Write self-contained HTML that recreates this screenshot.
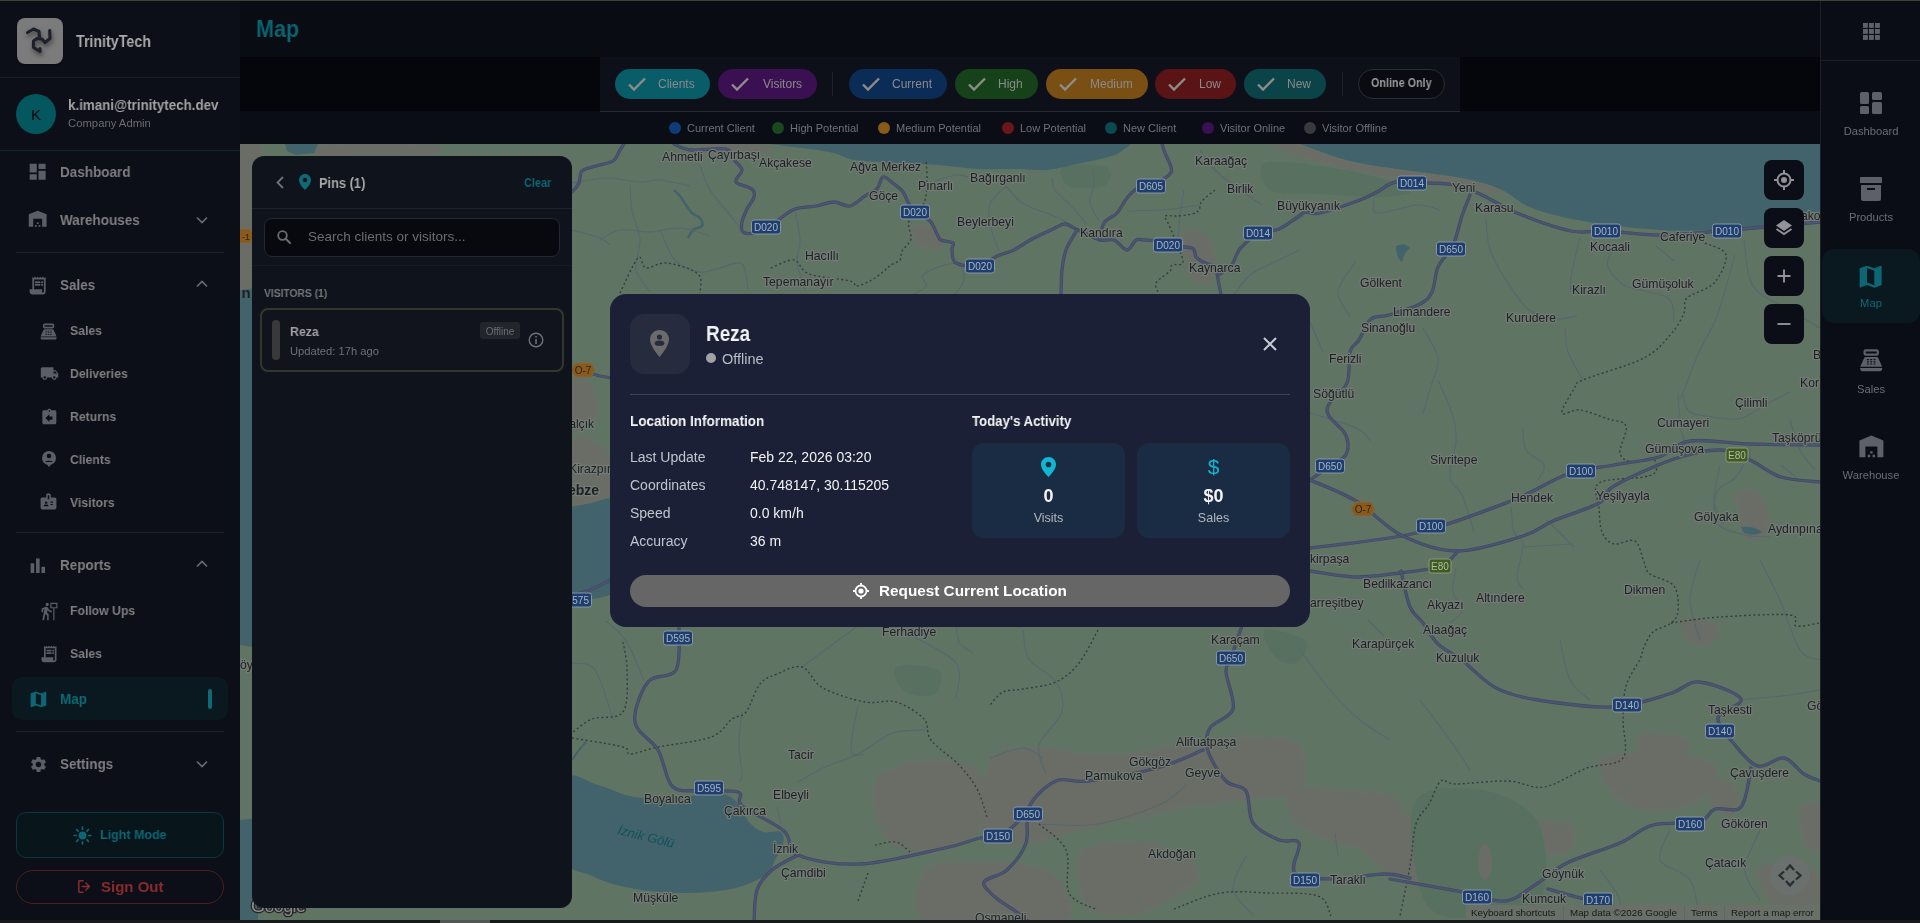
<!DOCTYPE html>
<html><head><meta charset="utf-8">
<style>
*{box-sizing:border-box;margin:0;padding:0}
html,body{width:1920px;height:923px;overflow:hidden;background:#0a0c14;font-family:"Liberation Sans",sans-serif}
.abs{position:absolute}
.abs,.ltxt,.subtxt,.chip span,.lg,.rlab,#map svg{will-change:transform}
#topline{left:0;top:0;width:1920px;height:1px;background:#3d4234}
/* left sidebar */
#lsb{left:0;top:0;width:240px;height:923px;background:#0c0f17}
.ltxt{position:absolute;color:#7f7f80;font-size:15px;font-weight:bold;white-space:nowrap;transform:scaleX(.9);transform-origin:0 0}
.sx{transform-origin:0 0}
.subtxt{position:absolute;color:#7f7f80;font-size:13px;font-weight:bold;white-space:nowrap;transform:scaleX(.94);transform-origin:0 0}
.div{position:absolute;height:1px;background:#1e2128}
/* header */
#hdr{left:240px;top:0;width:1580px;height:57px;background:#0a0c14}
#strip{left:240px;top:57px;width:1580px;height:54px;background:#04060b}
#fbox{left:600px;top:57px;width:860px;height:55px;background:#0d1019;border-bottom:1px solid #262a33}
.chip{position:absolute;top:69px;height:30px;border-radius:15px;color:#8a8a8a;font-size:12px;line-height:30px;white-space:nowrap}
.chip svg{position:absolute;left:12px;top:7px}
.chip span{position:absolute;right:15px;top:0}
#legend{left:240px;top:112px;width:1580px;height:32px;background:#0a0d15}
.lg{position:absolute;top:122px;font-size:11px;color:#6f7176;white-space:nowrap;line-height:12px}
.lg i{position:absolute;left:-18px;top:0;width:12px;height:12px;border-radius:6px}
/* right sidebar */
#rsb{left:1820px;top:0;width:100px;height:923px;background:#0a0d15;border-left:1px solid #1c1f26}
.rlab{position:absolute;width:100px;left:0;text-align:center;font-size:11.2px;color:#6c6e73}
</style></head><body>
<!-- MAP -->
<div id="map" class="abs" style="left:240px;top:144px;width:1580px;height:779px;background:#607464;overflow:hidden">
<svg width="1580" height="779" viewBox="240 144 1580 779" style="position:absolute;left:0;top:0" font-family="Liberation Sans, sans-serif">
<rect x="240" y="144" width="1580" height="779" fill="#607464"/>
<defs><filter id="tb" x="-20%" y="-20%" width="140%" height="140%"><feGaussianBlur stdDeviation="1.5"/></filter></defs><g filter="url(#tb)">
<path d="M990.0 760.0 C999.2 745.5 1021.7 748.8 1040.0 748.0 C1058.3 747.2 1081.7 754.7 1100.0 755.0 C1118.3 755.3 1133.3 752.5 1150.0 750.0 C1166.7 747.5 1183.3 742.3 1200.0 740.0 C1216.7 737.7 1233.3 735.2 1250.0 736.0 C1266.7 736.8 1291.7 736.0 1300.0 745.0 C1308.3 754.0 1308.3 780.8 1300.0 790.0 C1291.7 799.2 1266.7 797.5 1250.0 800.0 C1233.3 802.5 1216.7 802.5 1200.0 805.0 C1183.3 807.5 1170.0 810.8 1150.0 815.0 C1130.0 819.2 1101.7 825.0 1080.0 830.0 C1058.3 835.0 1035.8 844.2 1020.0 845.0 C1004.2 845.8 990.0 849.2 985.0 835.0 C980.0 820.8 980.8 774.5 990.0 760.0Z" fill="#6a6d66"/>
<path d="M925.0 870.0 C933.3 859.8 960.8 862.3 980.0 862.0 C999.2 861.7 1025.8 863.3 1040.0 868.0 C1054.2 872.7 1061.7 880.8 1065.0 890.0 C1068.3 899.2 1082.5 917.5 1060.0 923.0 C1037.5 928.5 952.5 931.8 930.0 923.0 C907.5 914.2 916.7 880.2 925.0 870.0Z" fill="#6a6d66"/>
<path d="M1082.0 850.0 C1090.7 844.5 1115.7 843.0 1131.0 843.0 C1146.3 843.0 1162.5 844.5 1174.0 850.0 C1185.5 855.5 1200.0 868.3 1200.0 876.0 C1200.0 883.7 1184.8 889.5 1174.0 896.0 C1163.2 902.5 1149.2 912.8 1135.0 915.0 C1120.8 917.2 1098.3 915.5 1089.0 909.0 C1079.7 902.5 1080.2 885.8 1079.0 876.0 C1077.8 866.2 1073.3 855.5 1082.0 850.0Z" fill="#6a6d66"/>
<path d="M1292.0 791.0 C1301.8 786.7 1333.0 788.8 1351.0 791.0 C1369.0 793.2 1391.8 789.8 1400.0 804.0 C1408.2 818.2 1406.5 868.3 1400.0 876.0 C1393.5 883.7 1374.7 856.5 1361.0 850.0 C1347.3 843.5 1329.5 842.5 1318.0 837.0 C1306.5 831.5 1296.3 824.7 1292.0 817.0 C1287.7 809.3 1282.2 795.3 1292.0 791.0Z" fill="#6a6d66"/>
<path d="M1390.0 817.0 C1397.2 812.3 1425.8 812.2 1433.0 822.0 C1440.2 831.8 1438.5 866.3 1433.0 876.0 C1427.5 885.7 1407.2 884.3 1400.0 880.0 C1392.8 875.7 1391.7 860.5 1390.0 850.0 C1388.3 839.5 1382.8 821.7 1390.0 817.0Z" fill="#6a6d66"/>
<path d="M1600.0 761.0 C1605.0 753.0 1630.8 751.3 1650.0 752.0 C1669.2 752.7 1706.7 757.0 1715.0 765.0 C1723.3 773.0 1709.2 792.5 1700.0 800.0 C1690.8 807.5 1673.3 810.0 1660.0 810.0 C1646.7 810.0 1630.0 808.2 1620.0 800.0 C1610.0 791.8 1595.0 769.0 1600.0 761.0Z" fill="#6a6d66"/>
<path d="M1640.0 735.0 C1646.8 731.8 1679.3 734.2 1686.0 738.0 C1692.7 741.8 1686.8 754.8 1680.0 758.0 C1673.2 761.2 1651.7 760.8 1645.0 757.0 C1638.3 753.2 1633.2 738.2 1640.0 735.0Z" fill="#6a6d66"/>
<path d="M1521.0 824.0 C1527.8 820.0 1563.5 821.2 1571.0 826.0 C1578.5 830.8 1572.8 849.0 1566.0 853.0 C1559.2 857.0 1537.5 854.8 1530.0 850.0 C1522.5 845.2 1514.2 828.0 1521.0 824.0Z" fill="#6a6d66"/>
<path d="M1682.0 620.0 C1686.7 617.2 1713.0 621.2 1718.0 625.0 C1723.0 628.8 1716.7 640.2 1712.0 643.0 C1707.3 645.8 1695.0 645.8 1690.0 642.0 C1685.0 638.2 1677.3 622.8 1682.0 620.0Z" fill="#6a6d66"/>
<path d="M1709.0 778.0 C1713.3 775.5 1734.2 783.5 1738.0 790.0 C1741.8 796.5 1736.3 814.5 1732.0 817.0 C1727.7 819.5 1715.8 811.5 1712.0 805.0 C1708.2 798.5 1704.7 780.5 1709.0 778.0Z" fill="#6a6d66"/>
<path d="M1800.0 810.0 C1802.5 803.3 1816.7 798.3 1820.0 805.0 C1823.3 811.7 1822.5 843.3 1820.0 850.0 C1817.5 856.7 1808.3 851.7 1805.0 845.0 C1801.7 838.3 1797.5 816.7 1800.0 810.0Z" fill="#6a6d66"/>
<path d="M1758.0 870.0 C1762.2 862.8 1789.7 860.3 1800.0 862.0 C1810.3 863.7 1816.7 872.2 1820.0 880.0 C1823.3 887.8 1827.5 904.8 1820.0 909.0 C1812.5 913.2 1785.3 911.5 1775.0 905.0 C1764.7 898.5 1753.8 877.2 1758.0 870.0Z" fill="#6a6d66"/>
<path d="M880.0 775.0 C889.2 766.7 914.2 760.8 930.0 760.0 C945.8 759.2 965.0 763.3 975.0 770.0 C985.0 776.7 990.0 789.2 990.0 800.0 C990.0 810.8 983.3 826.7 975.0 835.0 C966.7 843.3 953.3 848.3 940.0 850.0 C926.7 851.7 905.8 851.7 895.0 845.0 C884.2 838.3 877.5 821.7 875.0 810.0 C872.5 798.3 870.8 783.3 880.0 775.0Z" fill="#6a6d66"/>
<path d="M984.0 775.0 C986.5 769.5 997.3 766.2 1000.0 772.0 C1002.7 777.8 1002.5 804.5 1000.0 810.0 C997.5 815.5 987.7 810.8 985.0 805.0 C982.3 799.2 981.5 780.5 984.0 775.0Z" fill="#6a6d66"/>
<path d="M1184.0 232.0 C1187.2 227.5 1199.8 231.2 1205.0 235.0 C1210.2 238.8 1213.8 247.5 1215.0 255.0 C1216.2 262.5 1215.3 275.7 1212.0 280.0 C1208.7 284.3 1199.3 284.0 1195.0 281.0 C1190.7 278.0 1187.8 270.2 1186.0 262.0 C1184.2 253.8 1180.8 236.5 1184.0 232.0Z" fill="#6a6d66"/>
<path d="M912.0 228.0 C914.0 224.7 925.0 224.0 930.0 226.0 C935.0 228.0 940.7 236.2 942.0 240.0 C943.3 243.8 942.0 248.0 938.0 249.0 C934.0 250.0 922.3 249.5 918.0 246.0 C913.7 242.5 910.0 231.3 912.0 228.0Z" fill="#6a6d66"/>
<path d="M700.0 144.0 C709.2 142.3 748.3 142.7 760.0 144.0 C771.7 145.3 773.3 150.0 770.0 152.0 C766.7 154.0 750.8 155.7 740.0 156.0 C729.2 156.3 711.7 156.0 705.0 154.0 C698.3 152.0 690.8 145.7 700.0 144.0Z" fill="#6a6d66"/>
<path d="M572.0 440.0 C576.7 430.3 593.3 440.0 600.0 445.0 C606.7 450.0 611.0 460.8 612.0 470.0 C613.0 479.2 612.7 494.5 606.0 500.0 C599.3 505.5 577.7 513.0 572.0 503.0 C566.3 493.0 567.3 449.7 572.0 440.0Z" fill="#6a6d66"/>
<path d="M572.0 380.0 C575.0 373.3 585.7 380.0 590.0 385.0 C594.3 390.0 598.8 402.5 598.0 410.0 C597.2 417.5 589.3 427.5 585.0 430.0 C580.7 432.5 574.2 433.3 572.0 425.0 C569.8 416.7 569.0 386.7 572.0 380.0Z" fill="#6a6d66"/>
<path d="M236.0 144.0 C240.3 120.0 257.7 120.0 262.0 144.0 C266.3 168.0 266.3 264.0 262.0 288.0 C257.7 312.0 240.3 312.0 236.0 288.0 C231.7 264.0 231.7 168.0 236.0 144.0Z" fill="#6a6d66"/>
<path d="M320.0 144.0 C338.0 142.0 412.5 142.0 430.0 144.0 C447.5 146.0 443.0 154.0 425.0 156.0 C407.0 158.0 339.5 158.0 322.0 156.0 C304.5 154.0 302.0 146.0 320.0 144.0Z" fill="#6a6d66"/>
<path d="M1736.0 495.0 C1738.5 490.8 1749.7 487.5 1755.0 490.0 C1760.3 492.5 1766.3 502.5 1768.0 510.0 C1769.7 517.5 1768.8 530.3 1765.0 535.0 C1761.2 539.7 1749.2 541.3 1745.0 538.0 C1740.8 534.7 1741.5 522.2 1740.0 515.0 C1738.5 507.8 1733.5 499.2 1736.0 495.0Z" fill="#6a6d66"/>
<path d="M1275.0 144.0 C1278.0 143.0 1287.5 141.2 1300.0 144.0 C1312.5 146.8 1331.3 156.5 1350.0 161.0 C1368.7 165.5 1393.3 168.2 1412.0 171.0 C1430.7 173.8 1447.3 175.0 1462.0 178.0 C1476.7 181.0 1494.3 186.5 1500.0 189.0 C1505.7 191.5 1502.7 193.5 1496.0 193.0 C1489.3 192.5 1474.3 188.2 1460.0 186.0 C1445.7 183.8 1428.3 182.7 1410.0 180.0 C1391.7 177.3 1368.3 173.8 1350.0 170.0 C1331.7 166.2 1311.3 160.3 1300.0 157.0 C1288.7 153.7 1286.2 152.2 1282.0 150.0 C1277.8 147.8 1272.0 145.0 1275.0 144.0Z" fill="#6a6d66"/>
</g>
<path d="M1265.0 163.0 C1273.3 159.0 1300.8 163.5 1320.0 166.0 C1339.2 168.5 1365.0 173.7 1380.0 178.0 C1395.0 182.3 1410.0 188.8 1410.0 192.0 C1410.0 195.2 1395.0 196.7 1380.0 197.0 C1365.0 197.3 1338.3 195.2 1320.0 194.0 C1301.7 192.8 1279.2 195.2 1270.0 190.0 C1260.8 184.8 1256.7 167.0 1265.0 163.0Z" fill="#587060"/>
<path d="M1065.0 166.0 C1072.2 163.8 1099.2 163.8 1106.0 167.0 C1112.8 170.2 1111.2 181.5 1106.0 185.0 C1100.8 188.5 1082.2 188.8 1075.0 188.0 C1067.8 187.2 1064.7 183.7 1063.0 180.0 C1061.3 176.3 1057.8 168.2 1065.0 166.0Z" fill="#587060"/>
<path d="M1416.0 800.0 C1426.3 785.0 1461.0 788.0 1480.0 790.0 C1499.0 792.0 1519.2 802.0 1530.0 812.0 C1540.8 822.0 1543.3 835.3 1545.0 850.0 C1546.7 864.7 1547.5 889.2 1540.0 900.0 C1532.5 910.8 1516.7 912.5 1500.0 915.0 C1483.3 917.5 1453.7 920.8 1440.0 915.0 C1426.3 909.2 1422.0 899.2 1418.0 880.0 C1414.0 860.8 1405.7 815.0 1416.0 800.0Z" fill="#587060"/>
<path d="M1266.0 630.0 C1271.8 628.3 1299.3 635.0 1305.0 640.0 C1310.7 645.0 1303.3 656.2 1300.0 660.0 C1296.7 663.8 1290.0 664.7 1285.0 663.0 C1280.0 661.3 1273.2 655.5 1270.0 650.0 C1266.8 644.5 1260.2 631.7 1266.0 630.0Z" fill="#587060"/>
<path d="M896.0 667.0 C901.5 663.3 931.5 665.5 938.0 670.0 C944.5 674.5 940.5 690.3 935.0 694.0 C929.5 697.7 911.5 696.5 905.0 692.0 C898.5 687.5 890.5 670.7 896.0 667.0Z" fill="#587060"/>
<ellipse cx="1485" cy="862" rx="7" ry="18" fill="#6a6d66"/>
<path d="M1300.0 144.0 C1308.3 146.8 1331.3 156.5 1350.0 161.0 C1368.7 165.5 1393.3 168.2 1412.0 171.0 C1430.7 173.8 1447.3 175.0 1462.0 178.0 C1476.7 181.0 1488.3 184.0 1500.0 189.0 C1511.7 194.0 1518.2 202.7 1532.0 208.0 C1545.8 213.3 1561.8 217.3 1583.0 221.0 C1604.2 224.7 1636.2 228.5 1659.0 230.0 C1681.8 231.5 1702.3 230.7 1720.0 230.0 C1737.7 229.3 1748.3 227.8 1765.0 226.0 C1781.7 224.2 1810.8 220.2 1820.0 219.0 L1820 144 Z" fill="#42636c"/>
<path d="M770.0 144.0 C779.8 145.3 814.8 149.3 829.0 152.0 C843.2 154.7 843.3 158.2 855.0 160.0 C866.7 161.8 885.2 162.2 899.0 163.0 C912.8 163.8 924.8 164.0 938.0 165.0 C951.2 166.0 964.8 168.3 978.0 169.0 C991.2 169.7 1005.5 168.8 1017.0 169.0 C1028.5 169.2 1037.0 170.8 1047.0 170.0 C1057.0 169.2 1066.2 166.3 1077.0 164.0 C1087.8 161.7 1103.8 158.7 1112.0 156.0 C1120.2 153.3 1122.8 150.0 1126.0 148.0 C1129.2 146.0 1130.2 144.7 1131.0 144.0Z" fill="#42636c"/>
<path d="M285 144 L318 144 L314 153 L296 155 L287 151Z" fill="#42636c"/>
<path d="M240 290 L258 288 L258 648 L240 645Z" fill="#42636c"/>
<path d="M240 820 L258 818 L258 923 L240 923Z" fill="#42636c"/>
<path d="M565 508 L592 503 L608 498 L620 505 L620 592 L600 598 L565 602Z" fill="#42636c"/>
<path d="M565.0 780.0 C570.5 767.8 586.5 782.2 598.0 785.0 C609.5 787.8 620.7 795.0 634.0 797.0 C647.3 799.0 663.3 797.5 678.0 797.0 C692.7 796.5 711.7 792.5 722.0 794.0 C732.3 795.5 735.5 801.3 740.0 806.0 C744.5 810.7 745.2 817.7 749.0 822.0 C752.8 826.3 757.7 830.3 763.0 832.0 C768.3 833.7 777.7 829.8 781.0 832.0 C784.3 834.2 784.0 840.3 783.0 845.0 C782.0 849.7 777.8 855.0 775.0 860.0 C772.2 865.0 773.3 870.2 766.0 875.0 C758.7 879.8 745.7 886.0 731.0 889.0 C716.3 892.0 695.7 893.3 678.0 893.0 C660.3 892.7 639.7 890.0 625.0 887.0 C610.3 884.0 600.0 879.8 590.0 875.0 C580.0 870.2 569.2 873.8 565.0 858.0 C560.8 842.2 559.5 792.2 565.0 780.0Z" fill="#42636c"/>
<path d="M1396 246 Q1405 242 1410 248 Q1404 252 1402 262 Q1396 258 1396 246Z" fill="#42636c"/>
<path d="M1741 527 Q1755 526 1762 532 Q1755 537 1744 533Z" fill="#42636c"/>
<path d="M674.0 190.0 C675.0 191.0 678.0 193.5 680.0 196.0 C682.0 198.5 684.0 202.2 686.0 205.0 C688.0 207.8 689.7 210.8 692.0 213.0 C694.3 215.2 698.3 215.8 700.0 218.0 C701.7 220.2 703.2 224.0 702.0 226.0 C700.8 228.0 695.3 228.0 693.0 230.0 C690.7 232.0 688.8 236.7 688.0 238.0" fill="none" stroke="#42636c" stroke-width="2.5"/>
<path d="M572 760 Q580 748 586 742" fill="none" stroke="#42636c" stroke-width="2"/>
<path d="M572.0 183.0 C575.0 182.5 583.7 180.8 590.0 180.0 C596.3 179.2 601.7 177.7 610.0 178.0 C618.3 178.3 631.7 181.7 640.0 182.0 C648.3 182.3 651.7 179.3 660.0 180.0 C668.3 180.7 685.0 185.0 690.0 186.0" fill="none" stroke="#57676d" stroke-width="1.1"/>
<path d="M600.0 240.0 C603.3 238.3 611.7 231.3 620.0 230.0 C628.3 228.7 640.0 232.3 650.0 232.0 C660.0 231.7 670.0 227.3 680.0 228.0 C690.0 228.7 705.0 234.7 710.0 236.0" fill="none" stroke="#57676d" stroke-width="1.1"/>
<path d="M630.0 185.0 C630.3 189.2 630.3 200.8 632.0 210.0 C633.7 219.2 639.3 230.0 640.0 240.0 C640.7 250.0 634.3 261.3 636.0 270.0 C637.7 278.7 647.7 288.3 650.0 292.0" fill="none" stroke="#57676d" stroke-width="1.1"/>
<path d="M700.0 165.0 C701.7 169.2 705.0 181.7 710.0 190.0 C715.0 198.3 724.8 208.5 730.0 215.0 C735.2 221.5 739.2 226.7 741.0 229.0" fill="none" stroke="#57676d" stroke-width="1.1"/>
<path d="M572.0 230.0 C576.7 231.3 593.7 235.5 600.0 238.0 C606.3 240.5 608.3 243.8 610.0 245.0" fill="none" stroke="#57676d" stroke-width="1.1"/>
<path d="M660.0 230.0 C662.5 235.0 668.3 253.0 675.0 260.0 C681.7 267.0 692.5 270.7 700.0 272.0 C707.5 273.3 713.0 269.3 720.0 268.0 C727.0 266.7 737.3 260.3 742.0 264.0 C746.7 267.7 747.0 285.7 748.0 290.0" fill="none" stroke="#57676d" stroke-width="1.1"/>
<path d="M795.0 210.0 C795.8 215.0 799.7 231.3 800.0 240.0 C800.3 248.7 796.2 253.7 797.0 262.0 C797.8 270.3 803.7 285.3 805.0 290.0" fill="none" stroke="#57676d" stroke-width="1.1"/>
<path d="M935.0 181.0 C938.5 180.0 950.5 175.7 956.0 175.0 C961.5 174.3 966.0 176.7 968.0 177.0" fill="none" stroke="#57676d" stroke-width="1.1"/>
<path d="M1006.0 186.0 C1003.3 189.0 992.5 197.0 990.0 204.0 C987.5 211.0 989.5 220.2 991.0 228.0 C992.5 235.8 997.7 247.2 999.0 251.0" fill="none" stroke="#57676d" stroke-width="1.1"/>
<path d="M1006.0 186.0 C1009.0 189.0 1015.2 198.7 1024.0 204.0 C1032.8 209.3 1050.0 213.7 1059.0 218.0 C1068.0 222.3 1074.8 228.0 1078.0 230.0" fill="none" stroke="#57676d" stroke-width="1.1"/>
<path d="M1052.0 178.0 C1052.5 180.0 1051.8 185.3 1055.0 190.0 C1058.2 194.7 1065.7 200.3 1071.0 206.0 C1076.3 211.7 1084.3 221.0 1087.0 224.0" fill="none" stroke="#57676d" stroke-width="1.1"/>
<path d="M1093.0 168.0 C1093.2 170.5 1094.5 177.2 1094.0 183.0 C1093.5 188.8 1089.2 196.7 1090.0 203.0 C1090.8 209.3 1097.5 218.0 1099.0 221.0" fill="none" stroke="#57676d" stroke-width="1.1"/>
<path d="M956.0 263.0 C953.5 263.5 946.5 264.0 941.0 266.0 C935.5 268.0 925.5 271.7 923.0 275.0 C920.5 278.3 927.5 282.8 926.0 286.0 C924.5 289.2 916.0 292.7 914.0 294.0" fill="none" stroke="#57676d" stroke-width="1.1"/>
<path d="M961.0 265.0 C961.5 267.5 965.0 275.2 964.0 280.0 C963.0 284.8 956.5 291.7 955.0 294.0" fill="none" stroke="#57676d" stroke-width="1.1"/>
<path d="M1127.0 211.0 C1132.5 210.8 1151.2 210.5 1160.0 210.0 C1168.8 209.5 1173.3 208.8 1180.0 208.0 C1186.7 207.2 1196.7 205.5 1200.0 205.0" fill="none" stroke="#57676d" stroke-width="1.1"/>
<path d="M1184.0 190.0 C1183.3 194.2 1181.0 206.7 1180.0 215.0 C1179.0 223.3 1178.3 235.8 1178.0 240.0" fill="none" stroke="#57676d" stroke-width="1.1"/>
<path d="M1200.0 150.0 C1202.5 153.3 1208.3 163.3 1215.0 170.0 C1221.7 176.7 1232.2 184.2 1240.0 190.0 C1247.8 195.8 1258.3 202.5 1262.0 205.0" fill="none" stroke="#57676d" stroke-width="1.1"/>
<path d="M1230.0 300.0 C1233.3 295.8 1242.5 281.3 1250.0 275.0 C1257.5 268.7 1266.7 266.2 1275.0 262.0 C1283.3 257.8 1295.8 252.0 1300.0 250.0" fill="none" stroke="#57676d" stroke-width="1.1"/>
<path d="M1280.0 228.0 L1304.0 216.0" fill="none" stroke="#57676d" stroke-width="1.1"/>
<path d="M1374.0 198.0 C1374.5 200.5 1369.8 211.8 1377.0 213.0 C1384.2 214.2 1406.5 205.5 1417.0 205.0 C1427.5 204.5 1436.2 209.2 1440.0 210.0" fill="none" stroke="#57676d" stroke-width="1.1"/>
<path d="M1486.0 219.0 C1486.5 223.5 1487.0 238.0 1489.0 246.0 C1491.0 254.0 1493.8 259.3 1498.0 267.0 C1502.2 274.7 1508.8 284.8 1514.0 292.0 C1519.2 299.2 1522.5 305.5 1529.0 310.0 C1535.5 314.5 1545.0 318.0 1553.0 319.0 C1561.0 320.0 1573.0 316.5 1577.0 316.0" fill="none" stroke="#57676d" stroke-width="1.1"/>
<path d="M1580.0 237.0 C1578.5 243.7 1572.5 267.8 1571.0 277.0 C1569.5 286.2 1571.0 289.5 1571.0 292.0" fill="none" stroke="#57676d" stroke-width="1.1"/>
<path d="M1611.0 252.0 C1610.5 254.5 1605.5 261.3 1608.0 267.0 C1610.5 272.7 1616.0 280.8 1626.0 286.0 C1636.0 291.2 1660.0 292.0 1668.0 298.0 C1676.0 304.0 1673.0 318.0 1674.0 322.0" fill="none" stroke="#57676d" stroke-width="1.1"/>
<path d="M1656.0 246.0 L1674.0 261.0" fill="none" stroke="#57676d" stroke-width="1.1"/>
<path d="M1735.0 255.0 C1732.0 265.2 1723.0 299.8 1717.0 316.0 C1711.0 332.2 1705.0 338.3 1699.0 352.0 C1693.0 365.7 1684.0 390.3 1681.0 398.0" fill="none" stroke="#57676d" stroke-width="1.1"/>
<path d="M1744.0 240.0 C1745.5 247.7 1745.3 274.3 1753.0 286.0 C1760.7 297.7 1778.8 303.0 1790.0 310.0 C1801.2 317.0 1815.0 325.0 1820.0 328.0" fill="none" stroke="#57676d" stroke-width="1.1"/>
<path d="M1565.0 328.0 C1565.5 332.0 1565.0 343.3 1568.0 352.0 C1571.0 360.7 1580.5 375.3 1583.0 380.0" fill="none" stroke="#57676d" stroke-width="1.1"/>
<path d="M1356.0 261.0 C1353.0 266.2 1339.0 282.8 1338.0 292.0 C1337.0 301.2 1348.0 312.0 1350.0 316.0" fill="none" stroke="#57676d" stroke-width="1.1"/>
<path d="M1310.0 322.0 L1323.0 352.0" fill="none" stroke="#57676d" stroke-width="1.1"/>
<path d="M1423.0 328.0 C1425.5 333.0 1436.5 348.8 1438.0 358.0 C1439.5 367.2 1434.5 373.8 1432.0 383.0 C1429.5 392.2 1424.5 408.0 1423.0 413.0" fill="none" stroke="#57676d" stroke-width="1.1"/>
<path d="M1438.0 380.0 C1440.5 386.0 1450.0 405.8 1453.0 416.0 C1456.0 426.2 1456.5 430.8 1456.0 441.0 C1455.5 451.2 1449.0 468.0 1450.0 477.0 C1451.0 486.0 1458.0 485.8 1462.0 495.0 C1466.0 504.2 1472.0 525.8 1474.0 532.0" fill="none" stroke="#57676d" stroke-width="1.1"/>
<path d="M1523.0 428.0 C1523.5 431.7 1522.5 443.8 1526.0 450.0 C1529.5 456.2 1542.0 460.0 1544.0 465.0 C1546.0 470.0 1539.0 477.5 1538.0 480.0" fill="none" stroke="#57676d" stroke-width="1.1"/>
<path d="M1511.0 507.0 C1511.5 511.2 1512.0 525.8 1514.0 532.0 C1516.0 538.2 1522.5 536.5 1523.0 544.0 C1523.5 551.5 1517.0 569.5 1517.0 577.0 C1517.0 584.5 1522.0 587.0 1523.0 589.0" fill="none" stroke="#57676d" stroke-width="1.1"/>
<path d="M1547.0 520.0 C1550.0 523.0 1560.5 533.5 1565.0 538.0 C1569.5 542.5 1572.5 545.5 1574.0 547.0" fill="none" stroke="#57676d" stroke-width="1.1"/>
<path d="M1678.0 395.0 C1678.5 400.5 1680.0 420.3 1681.0 428.0 C1682.0 435.7 1683.5 438.8 1684.0 441.0" fill="none" stroke="#57676d" stroke-width="1.1"/>
<path d="M1720.0 465.0 C1719.0 471.0 1713.5 491.3 1714.0 501.0 C1714.5 510.7 1721.5 519.3 1723.0 523.0" fill="none" stroke="#57676d" stroke-width="1.1"/>
<path d="M1781.0 465.0 L1796.0 477.0" fill="none" stroke="#57676d" stroke-width="1.1"/>
<path d="M1750.0 444.0 L1750.0 462.0" fill="none" stroke="#57676d" stroke-width="1.1"/>
<path d="M1745.0 462.0 C1743.3 464.7 1739.5 473.3 1735.0 478.0 C1730.5 482.7 1721.5 484.7 1718.0 490.0 C1714.5 495.3 1714.0 504.2 1714.0 510.0 C1714.0 515.8 1712.8 520.8 1718.0 525.0 C1723.2 529.2 1736.3 533.0 1745.0 535.0 C1753.7 537.0 1765.8 536.7 1770.0 537.0" fill="none" stroke="#57676d" stroke-width="1.1"/>
<path d="M1683.0 395.0 C1684.2 397.8 1683.8 408.2 1690.0 412.0 C1696.2 415.8 1711.3 417.0 1720.0 418.0 C1728.7 419.0 1734.5 420.2 1742.0 418.0 C1749.5 415.8 1757.0 409.3 1765.0 405.0 C1773.0 400.7 1785.8 394.2 1790.0 392.0" fill="none" stroke="#57676d" stroke-width="1.1"/>
<path d="M1790.0 420.0 C1791.7 425.0 1795.8 441.7 1800.0 450.0 C1804.2 458.3 1812.5 466.7 1815.0 470.0" fill="none" stroke="#57676d" stroke-width="1.1"/>
<path d="M1456.0 568.0 C1455.5 572.0 1452.0 584.8 1453.0 592.0 C1454.0 599.2 1462.5 605.8 1462.0 611.0 C1461.5 616.2 1452.0 621.0 1450.0 623.0" fill="none" stroke="#57676d" stroke-width="1.1"/>
<path d="M1310.0 413.0 C1317.7 415.5 1345.8 423.3 1356.0 428.0 C1366.2 432.7 1368.5 438.8 1371.0 441.0" fill="none" stroke="#57676d" stroke-width="1.1"/>
<path d="M1523.0 547.0 L1571.0 544.0" fill="none" stroke="#57676d" stroke-width="1.1"/>
<path d="M1023.0 630.0 C1024.0 634.8 1023.5 650.3 1029.0 659.0 C1034.5 667.7 1050.5 673.2 1056.0 682.0 C1061.5 690.8 1064.8 701.5 1062.0 712.0 C1059.2 722.5 1041.7 734.7 1039.0 745.0 C1036.3 755.3 1044.8 769.2 1046.0 774.0" fill="none" stroke="#57676d" stroke-width="1.1"/>
<path d="M990.0 758.0 C995.5 756.3 1014.2 748.0 1023.0 748.0 C1031.8 748.0 1039.7 756.3 1043.0 758.0" fill="none" stroke="#57676d" stroke-width="1.1"/>
<path d="M1187.0 784.0 C1182.7 787.3 1175.8 797.3 1161.0 804.0 C1146.2 810.7 1118.3 820.7 1098.0 824.0 C1077.7 827.3 1048.8 824.0 1039.0 824.0" fill="none" stroke="#57676d" stroke-width="1.1"/>
<path d="M1246.0 856.0 C1243.8 861.5 1231.8 879.2 1233.0 889.0 C1234.2 898.8 1249.7 910.7 1253.0 915.0" fill="none" stroke="#57676d" stroke-width="1.1"/>
<path d="M1335.0 833.0 L1338.0 856.0" fill="none" stroke="#57676d" stroke-width="1.1"/>
<path d="M1368.0 620.0 L1384.0 636.0" fill="none" stroke="#57676d" stroke-width="1.1"/>
<path d="M644.0 681.0 C641.2 674.5 633.3 652.0 627.0 642.0 C620.7 632.0 609.5 624.5 606.0 621.0" fill="none" stroke="#57676d" stroke-width="1.1"/>
<path d="M572.0 663.0 C575.8 664.2 588.2 660.7 595.0 670.0 C601.8 679.3 610.0 710.8 613.0 719.0" fill="none" stroke="#57676d" stroke-width="1.1"/>
<path d="M802.0 667.0 C808.3 662.3 829.0 647.2 840.0 639.0 C851.0 630.8 863.3 621.5 868.0 618.0" fill="none" stroke="#57676d" stroke-width="1.1"/>
<path d="M742.0 712.0 C741.5 717.3 739.0 733.5 739.0 744.0 C739.0 754.5 742.0 768.7 742.0 775.0 C742.0 781.3 739.5 780.8 739.0 782.0" fill="none" stroke="#57676d" stroke-width="1.1"/>
<path d="M777.0 807.0 L781.0 824.0" fill="none" stroke="#57676d" stroke-width="1.1"/>
<path d="M798.0 782.0 C802.2 779.7 813.0 772.7 823.0 768.0 C833.0 763.3 846.3 759.8 858.0 754.0 C869.7 748.2 881.3 737.0 893.0 733.0 C904.7 729.0 922.2 730.5 928.0 730.0" fill="none" stroke="#57676d" stroke-width="1.1"/>
<path d="M858.0 705.0 C856.8 712.7 849.8 742.8 851.0 751.0 C852.2 759.2 862.7 753.5 865.0 754.0" fill="none" stroke="#57676d" stroke-width="1.1"/>
<path d="M910.0 635.0 C917.7 639.7 948.3 652.5 956.0 663.0 C963.7 673.5 956.0 692.2 956.0 698.0" fill="none" stroke="#57676d" stroke-width="1.1"/>
<path d="M956.0 621.0 C956.5 624.5 956.2 636.7 959.0 642.0 C961.8 647.3 970.7 651.2 973.0 653.0" fill="none" stroke="#57676d" stroke-width="1.1"/>
<path d="M1300.0 650.0 C1305.0 656.7 1320.0 678.3 1330.0 690.0 C1340.0 701.7 1350.0 711.7 1360.0 720.0 C1370.0 728.3 1385.0 736.7 1390.0 740.0" fill="none" stroke="#57676d" stroke-width="1.1"/>
<path d="M1420.0 700.0 C1425.0 706.7 1441.7 728.3 1450.0 740.0 C1458.3 751.7 1466.7 765.0 1470.0 770.0" fill="none" stroke="#57676d" stroke-width="1.1"/>
<path d="M1560.0 640.0 C1561.7 646.7 1565.0 670.0 1570.0 680.0 C1575.0 690.0 1586.7 696.7 1590.0 700.0" fill="none" stroke="#57676d" stroke-width="1.1"/>
<path d="M1700.0 560.0 C1698.3 566.7 1690.0 586.7 1690.0 600.0 C1690.0 613.3 1698.3 633.3 1700.0 640.0" fill="none" stroke="#57676d" stroke-width="1.1"/>
<path d="M1760.0 560.0 C1763.3 566.7 1773.3 585.0 1780.0 600.0 C1786.7 615.0 1793.3 640.0 1800.0 650.0 C1806.7 660.0 1816.7 658.3 1820.0 660.0" fill="none" stroke="#57676d" stroke-width="1.1"/>
<path d="M1740.0 700.0 C1748.3 699.2 1776.7 696.7 1790.0 695.0 C1803.3 693.3 1815.0 690.8 1820.0 690.0" fill="none" stroke="#57676d" stroke-width="1.1"/>
<path d="M1670.0 830.0 C1668.3 835.0 1656.7 851.7 1660.0 860.0 C1663.3 868.3 1683.3 870.0 1690.0 880.0 C1696.7 890.0 1698.3 913.3 1700.0 920.0" fill="none" stroke="#57676d" stroke-width="1.1"/>
<path d="M1760.0 830.0 C1757.5 836.7 1745.0 858.3 1745.0 870.0 C1745.0 881.7 1757.5 895.0 1760.0 900.0" fill="none" stroke="#57676d" stroke-width="1.1"/>
<path d="M1600.0 870.0 C1603.3 875.0 1617.5 891.7 1620.0 900.0 C1622.5 908.3 1615.8 916.7 1615.0 920.0" fill="none" stroke="#57676d" stroke-width="1.1"/>
<path d="M620.0 293.0 C623.0 287.2 633.7 262.2 638.0 258.0 C642.3 253.8 641.2 267.2 646.0 268.0 C650.8 268.8 658.3 262.0 667.0 263.0 C675.7 264.0 692.5 269.0 698.0 274.0 C703.5 279.0 699.7 289.8 700.0 293.0" fill="none" stroke="#363c3e" stroke-width="1.4" stroke-dasharray="2 2.6"/>
<path d="M771.0 268.0 C774.8 266.7 787.7 259.0 794.0 260.0 C800.3 261.0 799.7 270.5 809.0 274.0 C818.3 277.5 842.2 279.0 850.0 281.0 C857.8 283.0 852.7 286.0 856.0 286.0 C859.3 286.0 865.5 283.3 870.0 281.0 C874.5 278.7 879.5 274.7 883.0 272.0 C886.5 269.3 888.2 267.0 891.0 265.0 C893.8 263.0 898.2 262.3 900.0 260.0 C901.8 257.7 900.2 254.5 902.0 251.0 C903.8 247.5 909.8 244.0 911.0 239.0 C912.2 234.0 906.8 227.0 909.0 221.0 C911.2 215.0 921.0 209.8 924.0 203.0 C927.0 196.2 926.7 187.0 927.0 180.0 C927.3 173.0 926.2 164.2 926.0 161.0" fill="none" stroke="#363c3e" stroke-width="1.4" stroke-dasharray="2 2.6"/>
<path d="M1215.0 190.0 C1212.8 191.8 1204.7 197.7 1202.0 201.0 C1199.3 204.3 1200.7 207.8 1199.0 210.0 C1197.3 212.2 1195.7 213.0 1192.0 214.0 C1188.3 215.0 1181.5 215.7 1177.0 216.0 C1172.5 216.3 1166.5 214.8 1165.0 216.0 C1163.5 217.2 1166.5 219.5 1168.0 223.0 C1169.5 226.5 1171.5 230.5 1174.0 237.0 C1176.5 243.5 1183.3 257.3 1183.0 262.0 C1182.7 266.7 1174.2 263.5 1172.0 265.0 C1169.8 266.5 1172.7 268.0 1170.0 271.0 C1167.3 274.0 1157.8 279.2 1156.0 283.0 C1154.2 286.8 1158.5 292.2 1159.0 294.0" fill="none" stroke="#363c3e" stroke-width="1.4" stroke-dasharray="2 2.6"/>
<path d="M1705.0 243.0 C1708.5 245.0 1724.5 248.3 1726.0 255.0 C1727.5 261.7 1720.5 275.8 1714.0 283.0 C1707.5 290.2 1692.0 293.0 1687.0 298.0 C1682.0 303.0 1686.7 307.0 1684.0 313.0 C1681.3 319.0 1677.7 326.5 1671.0 334.0 C1664.3 341.5 1658.7 350.3 1644.0 358.0 C1629.3 365.7 1594.7 374.8 1583.0 380.0 C1571.3 385.2 1577.5 383.5 1574.0 389.0 C1570.5 394.5 1561.0 409.5 1562.0 413.0 C1563.0 416.5 1572.3 409.0 1580.0 410.0 C1587.7 411.0 1600.3 416.3 1608.0 419.0 C1615.7 421.7 1624.0 420.3 1626.0 426.0 C1628.0 431.7 1619.0 447.0 1620.0 453.0 C1621.0 459.0 1626.5 461.0 1632.0 462.0 C1637.5 463.0 1649.0 457.5 1653.0 459.0 C1657.0 460.5 1657.5 468.0 1656.0 471.0 C1654.5 474.0 1653.5 475.0 1644.0 477.0 C1634.5 479.0 1606.5 478.0 1599.0 483.0 C1591.5 488.0 1598.5 498.8 1599.0 507.0 C1599.5 515.2 1599.5 525.8 1602.0 532.0 C1604.5 538.2 1608.5 542.5 1614.0 544.0 C1619.5 545.5 1630.0 538.0 1635.0 541.0 C1640.0 544.0 1641.5 556.5 1644.0 562.0 C1646.5 567.5 1645.0 570.0 1650.0 574.0 C1655.0 578.0 1669.3 579.8 1674.0 586.0 C1678.7 592.2 1678.5 604.8 1678.0 611.0 C1677.5 617.2 1675.2 619.5 1671.0 623.0 C1666.8 626.5 1657.5 628.0 1653.0 632.0 C1648.5 636.0 1646.2 642.5 1644.0 647.0 C1641.8 651.5 1643.0 652.5 1640.0 659.0 C1637.0 665.5 1628.8 676.0 1626.0 686.0 C1623.2 696.0 1623.5 707.0 1623.0 719.0 C1622.5 731.0 1629.0 749.8 1623.0 758.0 C1617.0 766.2 1600.2 763.2 1587.0 768.0 C1573.8 772.8 1557.2 784.8 1544.0 787.0 C1530.8 789.2 1522.7 781.5 1508.0 781.0 C1493.3 780.5 1467.2 784.0 1456.0 784.0 C1444.8 784.0 1445.5 777.7 1441.0 781.0 C1436.5 784.3 1433.2 796.8 1429.0 804.0 C1424.8 811.2 1419.2 813.7 1416.0 824.0 C1412.8 834.3 1412.7 850.7 1410.0 866.0 C1407.3 881.3 1401.7 907.7 1400.0 916.0" fill="none" stroke="#363c3e" stroke-width="1.4" stroke-dasharray="2 2.6"/>
<path d="M1671.0 623.0 C1679.2 622.0 1700.2 618.3 1720.0 617.0 C1739.8 615.7 1777.3 613.5 1790.0 615.0 C1802.7 616.5 1791.0 624.7 1796.0 626.0 C1801.0 627.3 1816.0 623.5 1820.0 623.0" fill="none" stroke="#363c3e" stroke-width="1.4" stroke-dasharray="2 2.6"/>
<path d="M572.0 738.0 C580.5 739.5 613.3 744.3 623.0 747.0 C632.7 749.7 624.2 754.0 630.0 754.0 C635.8 754.0 644.5 749.8 658.0 747.0 C671.5 744.2 698.7 741.7 711.0 737.0 C723.3 732.3 726.2 723.2 732.0 719.0 C737.8 714.8 741.3 717.8 746.0 712.0 C750.7 706.2 754.8 690.3 760.0 684.0 C765.2 677.7 770.0 676.8 777.0 674.0 C784.0 671.2 794.3 664.7 802.0 667.0 C809.7 669.3 812.5 682.2 823.0 688.0 C833.5 693.8 852.8 699.7 865.0 702.0 C877.2 704.3 886.2 699.2 896.0 702.0 C905.8 704.8 918.2 712.7 924.0 719.0 C929.8 725.3 925.2 732.3 931.0 740.0 C936.8 747.7 951.3 756.8 959.0 765.0 C966.7 773.2 972.3 780.3 977.0 789.0 C981.7 797.7 985.3 812.3 987.0 817.0" fill="none" stroke="#363c3e" stroke-width="1.4" stroke-dasharray="2 2.6"/>
<path d="M623.0 642.0 C623.7 646.7 627.0 658.3 627.0 670.0 C627.0 681.7 628.8 703.8 623.0 712.0 C617.2 720.2 600.5 715.5 592.0 719.0 C583.5 722.5 575.3 730.7 572.0 733.0" fill="none" stroke="#363c3e" stroke-width="1.4" stroke-dasharray="2 2.6"/>
<path d="M875.0 845.0 C878.5 844.5 890.2 840.8 896.0 842.0 C901.8 843.2 907.7 850.3 910.0 852.0" fill="none" stroke="#363c3e" stroke-width="1.4" stroke-dasharray="2 2.6"/>
<path d="M868.0 873.0 L858.0 901.0" fill="none" stroke="#363c3e" stroke-width="1.4" stroke-dasharray="2 2.6"/>
<path d="M1098.0 630.0 C1094.8 635.5 1086.0 654.3 1079.0 663.0 C1072.0 671.7 1065.3 677.7 1056.0 682.0 C1046.7 686.3 1031.8 687.3 1023.0 689.0 C1014.2 690.7 1008.5 689.3 1003.0 692.0 C997.5 694.7 992.2 702.8 990.0 705.0" fill="none" stroke="#363c3e" stroke-width="1.4" stroke-dasharray="2 2.6"/>
<path d="M1039.0 824.0 C1043.5 828.3 1061.0 838.5 1066.0 850.0 C1071.0 861.5 1064.2 883.2 1069.0 893.0 C1073.8 902.8 1090.7 906.3 1095.0 909.0" fill="none" stroke="#363c3e" stroke-width="1.4" stroke-dasharray="2 2.6"/>
<path d="M1174.0 909.0 C1181.7 906.3 1204.2 895.7 1220.0 893.0 C1235.8 890.3 1252.7 892.5 1269.0 893.0 C1285.3 893.5 1307.7 892.2 1318.0 896.0 C1328.3 899.8 1328.8 912.7 1331.0 916.0" fill="none" stroke="#363c3e" stroke-width="1.4" stroke-dasharray="2 2.6"/>
<path d="M572.0 192.0 C573.2 190.5 577.3 186.5 579.0 183.0 C580.7 179.5 579.2 173.8 582.0 171.0 C584.8 168.2 590.8 167.7 596.0 166.0 C601.2 164.3 609.0 163.7 613.0 161.0 C617.0 158.3 618.2 152.8 620.0 150.0 C621.8 147.2 623.3 145.0 624.0 144.0" fill="none" stroke="#414963" stroke-width="3.3" stroke-linejoin="round" stroke-linecap="round"/>
<path d="M572.0 192.0 C573.2 190.5 577.3 186.5 579.0 183.0 C580.7 179.5 579.2 173.8 582.0 171.0 C584.8 168.2 590.8 167.7 596.0 166.0 C601.2 164.3 609.0 163.7 613.0 161.0 C617.0 158.3 618.2 152.8 620.0 150.0 C621.8 147.2 623.3 145.0 624.0 144.0" fill="none" stroke="#4b5572" stroke-width="1.8" stroke-linejoin="round" stroke-linecap="round"/>
<path d="M674.0 144.0 C676.8 145.0 682.3 149.2 691.0 150.0 C699.7 150.8 718.7 147.2 726.0 149.0 C733.3 150.8 732.3 157.5 735.0 161.0 C737.7 164.5 741.8 166.5 742.0 170.0 C742.2 173.5 734.3 178.8 736.0 182.0 C737.7 185.2 749.0 186.5 752.0 189.0 C755.0 191.5 754.8 193.7 754.0 197.0 C753.2 200.3 749.0 204.8 747.0 209.0 C745.0 213.2 742.7 218.2 742.0 222.0 C741.3 225.8 741.0 230.2 743.0 232.0 C745.0 233.8 750.2 233.7 754.0 233.0 C757.8 232.3 762.0 230.2 766.0 228.0 C770.0 225.8 773.2 223.2 778.0 220.0 C782.8 216.8 788.7 211.3 795.0 209.0 C801.3 206.7 809.5 207.2 816.0 206.0 C822.5 204.8 828.3 202.0 834.0 202.0 C839.7 202.0 844.8 207.0 850.0 206.0 C855.2 205.0 860.5 198.8 865.0 196.0 C869.5 193.2 874.0 192.2 877.0 189.0 C880.0 185.8 880.2 177.8 883.0 177.0 C885.8 176.2 890.7 181.5 894.0 184.0 C897.3 186.5 900.5 188.7 903.0 192.0 C905.5 195.3 906.8 200.5 909.0 204.0 C911.2 207.5 912.5 210.2 916.0 213.0 C919.5 215.8 926.5 217.5 930.0 221.0 C933.5 224.5 935.2 230.8 937.0 234.0 C938.8 237.2 938.3 238.5 941.0 240.0 C943.7 241.5 951.2 241.3 953.0 243.0 C954.8 244.7 951.5 246.7 952.0 250.0 C952.5 253.3 951.3 260.3 956.0 263.0 C960.7 265.7 973.2 267.2 980.0 266.0 C986.8 264.8 991.3 258.7 997.0 256.0 C1002.7 253.3 1008.2 252.8 1014.0 250.0 C1019.8 247.2 1025.2 242.7 1032.0 239.0 C1038.8 235.3 1049.5 230.5 1055.0 228.0 C1060.5 225.5 1061.2 223.7 1065.0 224.0 C1068.8 224.3 1072.2 227.3 1078.0 230.0 C1083.8 232.7 1094.0 238.3 1100.0 240.0 C1106.0 241.7 1109.5 238.3 1114.0 240.0 C1118.5 241.7 1123.3 250.0 1127.0 250.0 C1130.7 250.0 1133.2 241.7 1136.0 240.0 C1138.8 238.3 1140.7 239.8 1144.0 240.0 C1147.3 240.2 1151.7 240.0 1156.0 241.0 C1160.3 242.0 1164.0 244.8 1170.0 246.0 C1176.0 247.2 1187.7 246.2 1192.0 248.0 C1196.3 249.8 1194.2 254.7 1196.0 257.0 C1197.8 259.3 1199.8 260.2 1203.0 262.0 C1206.2 263.8 1212.3 264.2 1215.0 268.0 C1217.7 271.8 1218.0 280.7 1219.0 285.0 C1220.0 289.3 1220.7 292.5 1221.0 294.0" fill="none" stroke="#414963" stroke-width="3.3" stroke-linejoin="round" stroke-linecap="round"/>
<path d="M674.0 144.0 C676.8 145.0 682.3 149.2 691.0 150.0 C699.7 150.8 718.7 147.2 726.0 149.0 C733.3 150.8 732.3 157.5 735.0 161.0 C737.7 164.5 741.8 166.5 742.0 170.0 C742.2 173.5 734.3 178.8 736.0 182.0 C737.7 185.2 749.0 186.5 752.0 189.0 C755.0 191.5 754.8 193.7 754.0 197.0 C753.2 200.3 749.0 204.8 747.0 209.0 C745.0 213.2 742.7 218.2 742.0 222.0 C741.3 225.8 741.0 230.2 743.0 232.0 C745.0 233.8 750.2 233.7 754.0 233.0 C757.8 232.3 762.0 230.2 766.0 228.0 C770.0 225.8 773.2 223.2 778.0 220.0 C782.8 216.8 788.7 211.3 795.0 209.0 C801.3 206.7 809.5 207.2 816.0 206.0 C822.5 204.8 828.3 202.0 834.0 202.0 C839.7 202.0 844.8 207.0 850.0 206.0 C855.2 205.0 860.5 198.8 865.0 196.0 C869.5 193.2 874.0 192.2 877.0 189.0 C880.0 185.8 880.2 177.8 883.0 177.0 C885.8 176.2 890.7 181.5 894.0 184.0 C897.3 186.5 900.5 188.7 903.0 192.0 C905.5 195.3 906.8 200.5 909.0 204.0 C911.2 207.5 912.5 210.2 916.0 213.0 C919.5 215.8 926.5 217.5 930.0 221.0 C933.5 224.5 935.2 230.8 937.0 234.0 C938.8 237.2 938.3 238.5 941.0 240.0 C943.7 241.5 951.2 241.3 953.0 243.0 C954.8 244.7 951.5 246.7 952.0 250.0 C952.5 253.3 951.3 260.3 956.0 263.0 C960.7 265.7 973.2 267.2 980.0 266.0 C986.8 264.8 991.3 258.7 997.0 256.0 C1002.7 253.3 1008.2 252.8 1014.0 250.0 C1019.8 247.2 1025.2 242.7 1032.0 239.0 C1038.8 235.3 1049.5 230.5 1055.0 228.0 C1060.5 225.5 1061.2 223.7 1065.0 224.0 C1068.8 224.3 1072.2 227.3 1078.0 230.0 C1083.8 232.7 1094.0 238.3 1100.0 240.0 C1106.0 241.7 1109.5 238.3 1114.0 240.0 C1118.5 241.7 1123.3 250.0 1127.0 250.0 C1130.7 250.0 1133.2 241.7 1136.0 240.0 C1138.8 238.3 1140.7 239.8 1144.0 240.0 C1147.3 240.2 1151.7 240.0 1156.0 241.0 C1160.3 242.0 1164.0 244.8 1170.0 246.0 C1176.0 247.2 1187.7 246.2 1192.0 248.0 C1196.3 249.8 1194.2 254.7 1196.0 257.0 C1197.8 259.3 1199.8 260.2 1203.0 262.0 C1206.2 263.8 1212.3 264.2 1215.0 268.0 C1217.7 271.8 1218.0 280.7 1219.0 285.0 C1220.0 289.3 1220.7 292.5 1221.0 294.0" fill="none" stroke="#4b5572" stroke-width="1.8" stroke-linejoin="round" stroke-linecap="round"/>
<path d="M1218.0 275.0 C1220.2 273.5 1227.5 270.2 1231.0 266.0 C1234.5 261.8 1236.0 254.3 1239.0 250.0 C1242.0 245.7 1245.7 242.8 1249.0 240.0 C1252.3 237.2 1254.0 234.8 1259.0 233.0 C1264.0 231.2 1272.3 231.8 1279.0 229.0 C1285.7 226.2 1294.5 218.8 1299.0 216.0 C1303.5 213.2 1302.5 212.5 1306.0 212.0 C1309.5 211.5 1311.0 215.0 1320.0 213.0 C1329.0 211.0 1350.5 203.5 1360.0 200.0 C1369.5 196.5 1371.0 195.0 1377.0 192.0 C1383.0 189.0 1387.2 183.5 1396.0 182.0 C1404.8 180.5 1420.3 182.5 1430.0 183.0 C1439.7 183.5 1445.7 183.2 1454.0 185.0 C1462.3 186.8 1469.5 189.3 1480.0 194.0 C1490.5 198.7 1501.8 206.8 1517.0 213.0 C1532.2 219.2 1556.2 228.0 1571.0 231.0 C1585.8 234.0 1591.3 230.3 1606.0 231.0 C1620.7 231.7 1640.0 235.0 1659.0 235.0 C1678.0 235.0 1693.2 233.2 1720.0 231.0 C1746.8 228.8 1803.3 223.5 1820.0 222.0" fill="none" stroke="#414963" stroke-width="3.3" stroke-linejoin="round" stroke-linecap="round"/>
<path d="M1218.0 275.0 C1220.2 273.5 1227.5 270.2 1231.0 266.0 C1234.5 261.8 1236.0 254.3 1239.0 250.0 C1242.0 245.7 1245.7 242.8 1249.0 240.0 C1252.3 237.2 1254.0 234.8 1259.0 233.0 C1264.0 231.2 1272.3 231.8 1279.0 229.0 C1285.7 226.2 1294.5 218.8 1299.0 216.0 C1303.5 213.2 1302.5 212.5 1306.0 212.0 C1309.5 211.5 1311.0 215.0 1320.0 213.0 C1329.0 211.0 1350.5 203.5 1360.0 200.0 C1369.5 196.5 1371.0 195.0 1377.0 192.0 C1383.0 189.0 1387.2 183.5 1396.0 182.0 C1404.8 180.5 1420.3 182.5 1430.0 183.0 C1439.7 183.5 1445.7 183.2 1454.0 185.0 C1462.3 186.8 1469.5 189.3 1480.0 194.0 C1490.5 198.7 1501.8 206.8 1517.0 213.0 C1532.2 219.2 1556.2 228.0 1571.0 231.0 C1585.8 234.0 1591.3 230.3 1606.0 231.0 C1620.7 231.7 1640.0 235.0 1659.0 235.0 C1678.0 235.0 1693.2 233.2 1720.0 231.0 C1746.8 228.8 1803.3 223.5 1820.0 222.0" fill="none" stroke="#4b5572" stroke-width="1.8" stroke-linejoin="round" stroke-linecap="round"/>
<path d="M1470.0 195.0 C1468.7 198.5 1464.3 209.0 1462.0 216.0 C1459.7 223.0 1457.8 231.5 1456.0 237.0 C1454.2 242.5 1454.0 244.0 1451.0 249.0 C1448.0 254.0 1441.2 259.8 1438.0 267.0 C1434.8 274.2 1435.0 285.8 1432.0 292.0 C1429.0 298.2 1427.2 300.2 1420.0 304.0 C1412.8 307.8 1397.2 312.5 1389.0 315.0 C1380.8 317.5 1376.0 314.8 1371.0 319.0 C1366.0 323.2 1362.5 334.5 1359.0 340.0 C1355.5 345.5 1352.0 344.8 1350.0 352.0 C1348.0 359.2 1350.5 374.3 1347.0 383.0 C1343.5 391.7 1332.0 398.5 1329.0 404.0 C1326.0 409.5 1326.5 411.3 1329.0 416.0 C1331.5 420.7 1340.8 427.3 1344.0 432.0 C1347.2 436.7 1347.8 440.0 1348.0 444.0 C1348.2 448.0 1348.0 452.3 1345.0 456.0 C1342.0 459.7 1335.8 462.0 1330.0 466.0 C1324.2 470.0 1313.3 477.7 1310.0 480.0" fill="none" stroke="#414963" stroke-width="3.3" stroke-linejoin="round" stroke-linecap="round"/>
<path d="M1470.0 195.0 C1468.7 198.5 1464.3 209.0 1462.0 216.0 C1459.7 223.0 1457.8 231.5 1456.0 237.0 C1454.2 242.5 1454.0 244.0 1451.0 249.0 C1448.0 254.0 1441.2 259.8 1438.0 267.0 C1434.8 274.2 1435.0 285.8 1432.0 292.0 C1429.0 298.2 1427.2 300.2 1420.0 304.0 C1412.8 307.8 1397.2 312.5 1389.0 315.0 C1380.8 317.5 1376.0 314.8 1371.0 319.0 C1366.0 323.2 1362.5 334.5 1359.0 340.0 C1355.5 345.5 1352.0 344.8 1350.0 352.0 C1348.0 359.2 1350.5 374.3 1347.0 383.0 C1343.5 391.7 1332.0 398.5 1329.0 404.0 C1326.0 409.5 1326.5 411.3 1329.0 416.0 C1331.5 420.7 1340.8 427.3 1344.0 432.0 C1347.2 436.7 1347.8 440.0 1348.0 444.0 C1348.2 448.0 1348.0 452.3 1345.0 456.0 C1342.0 459.7 1335.8 462.0 1330.0 466.0 C1324.2 470.0 1313.3 477.7 1310.0 480.0" fill="none" stroke="#4b5572" stroke-width="1.8" stroke-linejoin="round" stroke-linecap="round"/>
<path d="M1310.0 548.0 C1327.7 545.5 1382.5 540.8 1416.0 533.0 C1449.5 525.2 1485.7 510.8 1511.0 501.0 C1536.3 491.2 1550.8 480.0 1568.0 474.0 C1585.2 468.0 1598.8 467.8 1614.0 465.0 C1629.2 462.2 1646.3 461.0 1659.0 457.0 C1671.7 453.0 1674.8 443.2 1690.0 441.0 C1705.2 438.8 1728.3 443.3 1750.0 444.0 C1771.7 444.7 1808.3 444.8 1820.0 445.0" fill="none" stroke="#414963" stroke-width="3.3" stroke-linejoin="round" stroke-linecap="round"/>
<path d="M1310.0 548.0 C1327.7 545.5 1382.5 540.8 1416.0 533.0 C1449.5 525.2 1485.7 510.8 1511.0 501.0 C1536.3 491.2 1550.8 480.0 1568.0 474.0 C1585.2 468.0 1598.8 467.8 1614.0 465.0 C1629.2 462.2 1646.3 461.0 1659.0 457.0 C1671.7 453.0 1674.8 443.2 1690.0 441.0 C1705.2 438.8 1728.3 443.3 1750.0 444.0 C1771.7 444.7 1808.3 444.8 1820.0 445.0" fill="none" stroke="#4b5572" stroke-width="1.8" stroke-linejoin="round" stroke-linecap="round"/>
<path d="M1310.0 480.0 C1317.7 483.5 1340.8 491.8 1356.0 501.0 C1371.2 510.2 1384.3 526.7 1401.0 535.0 C1417.7 543.3 1435.7 550.8 1456.0 551.0 C1476.3 551.2 1506.8 541.0 1523.0 536.0 C1539.2 531.0 1540.3 526.5 1553.0 521.0 C1565.7 515.5 1588.8 508.8 1599.0 503.0 C1609.2 497.2 1601.5 493.3 1614.0 486.0 C1626.5 478.7 1656.3 465.0 1674.0 459.0 C1691.7 453.0 1707.3 449.8 1720.0 450.0 C1732.7 450.2 1739.8 455.5 1750.0 460.0 C1760.2 464.5 1769.3 473.3 1781.0 477.0 C1792.7 480.7 1813.5 481.2 1820.0 482.0" fill="none" stroke="#414963" stroke-width="3.3" stroke-linejoin="round" stroke-linecap="round"/>
<path d="M1310.0 480.0 C1317.7 483.5 1340.8 491.8 1356.0 501.0 C1371.2 510.2 1384.3 526.7 1401.0 535.0 C1417.7 543.3 1435.7 550.8 1456.0 551.0 C1476.3 551.2 1506.8 541.0 1523.0 536.0 C1539.2 531.0 1540.3 526.5 1553.0 521.0 C1565.7 515.5 1588.8 508.8 1599.0 503.0 C1609.2 497.2 1601.5 493.3 1614.0 486.0 C1626.5 478.7 1656.3 465.0 1674.0 459.0 C1691.7 453.0 1707.3 449.8 1720.0 450.0 C1732.7 450.2 1739.8 455.5 1750.0 460.0 C1760.2 464.5 1769.3 473.3 1781.0 477.0 C1792.7 480.7 1813.5 481.2 1820.0 482.0" fill="none" stroke="#4b5572" stroke-width="1.8" stroke-linejoin="round" stroke-linecap="round"/>
<path d="M1310.0 571.0 C1317.7 572.0 1341.0 576.7 1356.0 577.0 C1371.0 577.3 1385.8 574.7 1400.0 573.0 C1414.2 571.3 1432.8 569.0 1441.0 567.0 C1449.2 565.0 1446.2 563.7 1449.0 561.0 C1451.8 558.3 1456.5 552.7 1458.0 551.0" fill="none" stroke="#414963" stroke-width="3.3" stroke-linejoin="round" stroke-linecap="round"/>
<path d="M1310.0 571.0 C1317.7 572.0 1341.0 576.7 1356.0 577.0 C1371.0 577.3 1385.8 574.7 1400.0 573.0 C1414.2 571.3 1432.8 569.0 1441.0 567.0 C1449.2 565.0 1446.2 563.7 1449.0 561.0 C1451.8 558.3 1456.5 552.7 1458.0 551.0" fill="none" stroke="#4b5572" stroke-width="1.8" stroke-linejoin="round" stroke-linecap="round"/>
<path d="M1401.0 571.0 C1402.5 577.0 1406.3 598.3 1410.0 607.0 C1413.7 615.7 1418.3 616.8 1423.0 623.0 C1427.7 629.2 1431.5 637.8 1438.0 644.0 C1444.5 650.2 1456.2 655.7 1462.0 660.0 C1467.8 664.3 1467.0 665.2 1473.0 670.0 C1479.0 674.8 1487.2 684.0 1498.0 689.0 C1508.8 694.0 1518.8 697.0 1538.0 700.0 C1557.2 703.0 1591.2 708.0 1613.0 707.0 C1634.8 706.0 1654.7 698.2 1669.0 694.0 C1683.3 689.8 1687.0 681.2 1699.0 682.0 C1711.0 682.8 1737.8 693.0 1741.0 699.0 C1744.2 705.0 1719.0 710.3 1718.0 718.0 C1717.0 725.7 1728.3 737.0 1735.0 745.0 C1741.7 753.0 1749.8 763.8 1758.0 766.0 C1766.2 768.2 1776.3 756.7 1784.0 758.0 C1791.7 759.3 1798.0 770.2 1804.0 774.0 C1810.0 777.8 1817.3 779.8 1820.0 781.0" fill="none" stroke="#414963" stroke-width="3.3" stroke-linejoin="round" stroke-linecap="round"/>
<path d="M1401.0 571.0 C1402.5 577.0 1406.3 598.3 1410.0 607.0 C1413.7 615.7 1418.3 616.8 1423.0 623.0 C1427.7 629.2 1431.5 637.8 1438.0 644.0 C1444.5 650.2 1456.2 655.7 1462.0 660.0 C1467.8 664.3 1467.0 665.2 1473.0 670.0 C1479.0 674.8 1487.2 684.0 1498.0 689.0 C1508.8 694.0 1518.8 697.0 1538.0 700.0 C1557.2 703.0 1591.2 708.0 1613.0 707.0 C1634.8 706.0 1654.7 698.2 1669.0 694.0 C1683.3 689.8 1687.0 681.2 1699.0 682.0 C1711.0 682.8 1737.8 693.0 1741.0 699.0 C1744.2 705.0 1719.0 710.3 1718.0 718.0 C1717.0 725.7 1728.3 737.0 1735.0 745.0 C1741.7 753.0 1749.8 763.8 1758.0 766.0 C1766.2 768.2 1776.3 756.7 1784.0 758.0 C1791.7 759.3 1798.0 770.2 1804.0 774.0 C1810.0 777.8 1817.3 779.8 1820.0 781.0" fill="none" stroke="#4b5572" stroke-width="1.8" stroke-linejoin="round" stroke-linecap="round"/>
<path d="M1751.0 768.0 C1749.3 774.5 1747.0 800.2 1741.0 807.0 C1735.0 813.8 1722.0 806.5 1715.0 809.0 C1708.0 811.5 1709.3 819.3 1699.0 822.0 C1688.7 824.7 1666.2 821.5 1653.0 825.0 C1639.8 828.5 1634.3 836.7 1620.0 843.0 C1605.7 849.3 1580.7 856.3 1567.0 863.0 C1553.3 869.7 1548.3 876.7 1538.0 883.0 C1527.7 889.3 1517.7 899.5 1505.0 901.0 C1492.3 902.5 1481.2 895.7 1462.0 892.0 C1442.8 888.3 1402.0 881.2 1390.0 879.0" fill="none" stroke="#414963" stroke-width="3.3" stroke-linejoin="round" stroke-linecap="round"/>
<path d="M1751.0 768.0 C1749.3 774.5 1747.0 800.2 1741.0 807.0 C1735.0 813.8 1722.0 806.5 1715.0 809.0 C1708.0 811.5 1709.3 819.3 1699.0 822.0 C1688.7 824.7 1666.2 821.5 1653.0 825.0 C1639.8 828.5 1634.3 836.7 1620.0 843.0 C1605.7 849.3 1580.7 856.3 1567.0 863.0 C1553.3 869.7 1548.3 876.7 1538.0 883.0 C1527.7 889.3 1517.7 899.5 1505.0 901.0 C1492.3 902.5 1481.2 895.7 1462.0 892.0 C1442.8 888.3 1402.0 881.2 1390.0 879.0" fill="none" stroke="#4b5572" stroke-width="1.8" stroke-linejoin="round" stroke-linecap="round"/>
<path d="M1548.0 889.0 C1554.0 890.7 1575.3 896.8 1584.0 899.0 C1592.7 901.2 1597.3 901.5 1600.0 902.0" fill="none" stroke="#414963" stroke-width="3.3" stroke-linejoin="round" stroke-linecap="round"/>
<path d="M1548.0 889.0 C1554.0 890.7 1575.3 896.8 1584.0 899.0 C1592.7 901.2 1597.3 901.5 1600.0 902.0" fill="none" stroke="#4b5572" stroke-width="1.8" stroke-linejoin="round" stroke-linecap="round"/>
<path d="M679.0 628.0 C678.5 635.0 681.2 661.0 676.0 670.0 C670.8 679.0 654.8 673.3 648.0 682.0 C641.2 690.7 633.3 710.7 635.0 722.0 C636.7 733.3 651.8 739.3 658.0 750.0 C664.2 760.7 665.5 779.2 672.0 786.0 C678.5 792.8 686.0 790.0 697.0 791.0 C708.0 792.0 730.5 789.5 738.0 792.0 C745.5 794.5 734.3 799.5 742.0 806.0 C749.7 812.5 774.7 822.8 784.0 831.0 C793.3 839.2 785.2 849.5 798.0 855.0 C810.8 860.5 836.5 865.2 861.0 864.0 C885.5 862.8 925.2 852.3 945.0 848.0 C964.8 843.7 970.8 840.0 980.0 838.0 C989.2 836.0 993.3 839.0 1000.0 836.0 C1006.7 833.0 1016.7 822.7 1020.0 820.0" fill="none" stroke="#414963" stroke-width="3.3" stroke-linejoin="round" stroke-linecap="round"/>
<path d="M679.0 628.0 C678.5 635.0 681.2 661.0 676.0 670.0 C670.8 679.0 654.8 673.3 648.0 682.0 C641.2 690.7 633.3 710.7 635.0 722.0 C636.7 733.3 651.8 739.3 658.0 750.0 C664.2 760.7 665.5 779.2 672.0 786.0 C678.5 792.8 686.0 790.0 697.0 791.0 C708.0 792.0 730.5 789.5 738.0 792.0 C745.5 794.5 734.3 799.5 742.0 806.0 C749.7 812.5 774.7 822.8 784.0 831.0 C793.3 839.2 785.2 849.5 798.0 855.0 C810.8 860.5 836.5 865.2 861.0 864.0 C885.5 862.8 925.2 852.3 945.0 848.0 C964.8 843.7 970.8 840.0 980.0 838.0 C989.2 836.0 993.3 839.0 1000.0 836.0 C1006.7 833.0 1016.7 822.7 1020.0 820.0" fill="none" stroke="#4b5572" stroke-width="1.8" stroke-linejoin="round" stroke-linecap="round"/>
<path d="M1244.0 620.0 C1241.8 626.3 1234.0 649.3 1231.0 658.0 C1228.0 666.7 1225.7 663.5 1226.0 672.0 C1226.3 680.5 1235.7 699.7 1233.0 709.0 C1230.3 718.3 1214.2 721.0 1210.0 728.0 C1205.8 735.0 1205.3 742.2 1208.0 751.0 C1210.7 759.8 1219.7 774.3 1226.0 781.0 C1232.3 787.7 1241.5 784.0 1246.0 791.0 C1250.5 798.0 1247.5 814.8 1253.0 823.0 C1258.5 831.2 1271.3 836.7 1279.0 840.0 C1286.7 843.3 1296.3 837.5 1299.0 843.0 C1301.7 848.5 1289.0 867.0 1295.0 873.0 C1301.0 879.0 1320.2 878.8 1335.0 879.0 C1349.8 879.2 1371.5 874.2 1384.0 874.0 C1396.5 873.8 1405.7 877.3 1410.0 878.0" fill="none" stroke="#414963" stroke-width="3.3" stroke-linejoin="round" stroke-linecap="round"/>
<path d="M1244.0 620.0 C1241.8 626.3 1234.0 649.3 1231.0 658.0 C1228.0 666.7 1225.7 663.5 1226.0 672.0 C1226.3 680.5 1235.7 699.7 1233.0 709.0 C1230.3 718.3 1214.2 721.0 1210.0 728.0 C1205.8 735.0 1205.3 742.2 1208.0 751.0 C1210.7 759.8 1219.7 774.3 1226.0 781.0 C1232.3 787.7 1241.5 784.0 1246.0 791.0 C1250.5 798.0 1247.5 814.8 1253.0 823.0 C1258.5 831.2 1271.3 836.7 1279.0 840.0 C1286.7 843.3 1296.3 837.5 1299.0 843.0 C1301.7 848.5 1289.0 867.0 1295.0 873.0 C1301.0 879.0 1320.2 878.8 1335.0 879.0 C1349.8 879.2 1371.5 874.2 1384.0 874.0 C1396.5 873.8 1405.7 877.3 1410.0 878.0" fill="none" stroke="#4b5572" stroke-width="1.8" stroke-linejoin="round" stroke-linecap="round"/>
<path d="M1203.0 750.0 C1195.3 753.0 1176.2 762.8 1157.0 768.0 C1137.8 773.2 1104.8 778.8 1088.0 781.0 C1071.2 783.2 1065.8 776.7 1056.0 781.0 C1046.2 785.3 1034.0 796.7 1029.0 807.0 C1024.0 817.3 1029.7 832.5 1026.0 843.0 C1022.3 853.5 1014.0 863.5 1007.0 870.0 C1000.0 876.5 986.0 877.5 984.0 882.0 C982.0 886.5 989.3 891.8 995.0 897.0 C1000.7 902.2 1012.2 908.7 1018.0 913.0 C1023.8 917.3 1028.0 921.3 1030.0 923.0" fill="none" stroke="#414963" stroke-width="3.3" stroke-linejoin="round" stroke-linecap="round"/>
<path d="M1203.0 750.0 C1195.3 753.0 1176.2 762.8 1157.0 768.0 C1137.8 773.2 1104.8 778.8 1088.0 781.0 C1071.2 783.2 1065.8 776.7 1056.0 781.0 C1046.2 785.3 1034.0 796.7 1029.0 807.0 C1024.0 817.3 1029.7 832.5 1026.0 843.0 C1022.3 853.5 1014.0 863.5 1007.0 870.0 C1000.0 876.5 986.0 877.5 984.0 882.0 C982.0 886.5 989.3 891.8 995.0 897.0 C1000.7 902.2 1012.2 908.7 1018.0 913.0 C1023.8 917.3 1028.0 921.3 1030.0 923.0" fill="none" stroke="#4b5572" stroke-width="1.8" stroke-linejoin="round" stroke-linecap="round"/>
<path d="M572.0 595.0 C575.0 594.2 583.7 592.5 590.0 590.0 C596.3 587.5 606.7 581.7 610.0 580.0" fill="none" stroke="#414963" stroke-width="3.3" stroke-linejoin="round" stroke-linecap="round"/>
<path d="M572.0 595.0 C575.0 594.2 583.7 592.5 590.0 590.0 C596.3 587.5 606.7 581.7 610.0 580.0" fill="none" stroke="#4b5572" stroke-width="1.8" stroke-linejoin="round" stroke-linecap="round"/>
<path d="M560.0 372.0 C564.2 372.0 578.3 371.3 585.0 372.0 C591.7 372.7 595.5 375.0 600.0 376.0 C604.5 377.0 610.0 377.7 612.0 378.0" fill="none" stroke="#414963" stroke-width="3.3" stroke-linejoin="round" stroke-linecap="round"/>
<path d="M560.0 372.0 C564.2 372.0 578.3 371.3 585.0 372.0 C591.7 372.7 595.5 375.0 600.0 376.0 C604.5 377.0 610.0 377.7 612.0 378.0" fill="none" stroke="#4b5572" stroke-width="1.8" stroke-linejoin="round" stroke-linecap="round"/>
<path d="M1077.0 230.0 C1075.2 233.3 1068.5 243.3 1066.0 250.0 C1063.5 256.7 1062.8 262.7 1062.0 270.0 C1061.2 277.3 1061.2 290.0 1061.0 294.0" fill="none" stroke="#414963" stroke-width="3.3" stroke-linejoin="round" stroke-linecap="round"/>
<path d="M1077.0 230.0 C1075.2 233.3 1068.5 243.3 1066.0 250.0 C1063.5 256.7 1062.8 262.7 1062.0 270.0 C1061.2 277.3 1061.2 290.0 1061.0 294.0" fill="none" stroke="#4b5572" stroke-width="1.8" stroke-linejoin="round" stroke-linecap="round"/>
<path d="M1100.0 240.0 C1100.7 237.2 1101.2 227.5 1104.0 223.0 C1106.8 218.5 1113.2 217.2 1117.0 213.0 C1120.8 208.8 1123.5 202.2 1127.0 198.0 C1130.5 193.8 1134.0 190.0 1138.0 188.0 C1142.0 186.0 1145.8 188.2 1151.0 186.0 C1156.2 183.8 1165.7 178.2 1169.0 175.0 C1172.3 171.8 1171.7 170.7 1171.0 167.0 C1170.3 163.3 1166.5 156.8 1165.0 153.0 C1163.5 149.2 1162.5 145.5 1162.0 144.0" fill="none" stroke="#414963" stroke-width="3.3" stroke-linejoin="round" stroke-linecap="round"/>
<path d="M1100.0 240.0 C1100.7 237.2 1101.2 227.5 1104.0 223.0 C1106.8 218.5 1113.2 217.2 1117.0 213.0 C1120.8 208.8 1123.5 202.2 1127.0 198.0 C1130.5 193.8 1134.0 190.0 1138.0 188.0 C1142.0 186.0 1145.8 188.2 1151.0 186.0 C1156.2 183.8 1165.7 178.2 1169.0 175.0 C1172.3 171.8 1171.7 170.7 1171.0 167.0 C1170.3 163.3 1166.5 156.8 1165.0 153.0 C1163.5 149.2 1162.5 145.5 1162.0 144.0" fill="none" stroke="#4b5572" stroke-width="1.8" stroke-linejoin="round" stroke-linecap="round"/>
<path d="M798.0 855.0 C793.7 857.5 778.8 864.2 772.0 870.0 C765.2 875.8 760.0 881.2 757.0 890.0 C754.0 898.8 754.5 917.5 754.0 923.0" fill="none" stroke="#414963" stroke-width="3.3" stroke-linejoin="round" stroke-linecap="round"/>
<path d="M798.0 855.0 C793.7 857.5 778.8 864.2 772.0 870.0 C765.2 875.8 760.0 881.2 757.0 890.0 C754.0 898.8 754.5 917.5 754.0 923.0" fill="none" stroke="#4b5572" stroke-width="1.8" stroke-linejoin="round" stroke-linecap="round"/>
<rect x="751.5" y="220" width="29" height="14" rx="2.5" fill="#1e3f6e" stroke="#8a95a5" stroke-width="1"/><text x="766" y="231" font-size="10" fill="#a9b4c4" text-anchor="middle">D020</text>
<rect x="900.5" y="205" width="29" height="14" rx="2.5" fill="#1e3f6e" stroke="#8a95a5" stroke-width="1"/><text x="915" y="216" font-size="10" fill="#a9b4c4" text-anchor="middle">D020</text>
<rect x="965.5" y="259" width="29" height="14" rx="2.5" fill="#1e3f6e" stroke="#8a95a5" stroke-width="1"/><text x="980" y="270" font-size="10" fill="#a9b4c4" text-anchor="middle">D020</text>
<rect x="1136.5" y="179" width="29" height="14" rx="2.5" fill="#1e3f6e" stroke="#8a95a5" stroke-width="1"/><text x="1151" y="190" font-size="10" fill="#a9b4c4" text-anchor="middle">D605</text>
<rect x="1243.5" y="226" width="29" height="14" rx="2.5" fill="#1e3f6e" stroke="#8a95a5" stroke-width="1"/><text x="1258" y="237" font-size="10" fill="#a9b4c4" text-anchor="middle">D014</text>
<rect x="1153.5" y="238" width="29" height="14" rx="2.5" fill="#1e3f6e" stroke="#8a95a5" stroke-width="1"/><text x="1168" y="249" font-size="10" fill="#a9b4c4" text-anchor="middle">D020</text>
<rect x="1397.5" y="176" width="29" height="14" rx="2.5" fill="#1e3f6e" stroke="#8a95a5" stroke-width="1"/><text x="1412" y="187" font-size="10" fill="#a9b4c4" text-anchor="middle">D014</text>
<rect x="1436.5" y="242" width="29" height="14" rx="2.5" fill="#1e3f6e" stroke="#8a95a5" stroke-width="1"/><text x="1451" y="253" font-size="10" fill="#a9b4c4" text-anchor="middle">D650</text>
<rect x="1591.5" y="224" width="29" height="14" rx="2.5" fill="#1e3f6e" stroke="#8a95a5" stroke-width="1"/><text x="1606" y="235" font-size="10" fill="#a9b4c4" text-anchor="middle">D010</text>
<rect x="1712.5" y="224" width="29" height="14" rx="2.5" fill="#1e3f6e" stroke="#8a95a5" stroke-width="1"/><text x="1727" y="235" font-size="10" fill="#a9b4c4" text-anchor="middle">D010</text>
<rect x="1315.5" y="459" width="29" height="14" rx="2.5" fill="#1e3f6e" stroke="#8a95a5" stroke-width="1"/><text x="1330" y="470" font-size="10" fill="#a9b4c4" text-anchor="middle">D650</text>
<rect x="1416.5" y="519" width="29" height="14" rx="2.5" fill="#1e3f6e" stroke="#8a95a5" stroke-width="1"/><text x="1431" y="530" font-size="10" fill="#a9b4c4" text-anchor="middle">D100</text>
<rect x="1566.5" y="464" width="29" height="14" rx="2.5" fill="#1e3f6e" stroke="#8a95a5" stroke-width="1"/><text x="1581" y="475" font-size="10" fill="#a9b4c4" text-anchor="middle">D100</text>
<rect x="663.5" y="631" width="29" height="14" rx="2.5" fill="#1e3f6e" stroke="#8a95a5" stroke-width="1"/><text x="678" y="642" font-size="10" fill="#a9b4c4" text-anchor="middle">D595</text>
<rect x="694.5" y="781" width="29" height="14" rx="2.5" fill="#1e3f6e" stroke="#8a95a5" stroke-width="1"/><text x="709" y="792" font-size="10" fill="#a9b4c4" text-anchor="middle">D595</text>
<rect x="983.5" y="829" width="29" height="14" rx="2.5" fill="#1e3f6e" stroke="#8a95a5" stroke-width="1"/><text x="998" y="840" font-size="10" fill="#a9b4c4" text-anchor="middle">D150</text>
<rect x="1013.5" y="807" width="29" height="14" rx="2.5" fill="#1e3f6e" stroke="#8a95a5" stroke-width="1"/><text x="1028" y="818" font-size="10" fill="#a9b4c4" text-anchor="middle">D650</text>
<rect x="1216.5" y="651" width="29" height="14" rx="2.5" fill="#1e3f6e" stroke="#8a95a5" stroke-width="1"/><text x="1231" y="662" font-size="10" fill="#a9b4c4" text-anchor="middle">D650</text>
<rect x="1290.5" y="873" width="29" height="14" rx="2.5" fill="#1e3f6e" stroke="#8a95a5" stroke-width="1"/><text x="1305" y="884" font-size="10" fill="#a9b4c4" text-anchor="middle">D150</text>
<rect x="1612.5" y="698" width="29" height="14" rx="2.5" fill="#1e3f6e" stroke="#8a95a5" stroke-width="1"/><text x="1627" y="709" font-size="10" fill="#a9b4c4" text-anchor="middle">D140</text>
<rect x="1705.5" y="724" width="29" height="14" rx="2.5" fill="#1e3f6e" stroke="#8a95a5" stroke-width="1"/><text x="1720" y="735" font-size="10" fill="#a9b4c4" text-anchor="middle">D140</text>
<rect x="1675.5" y="817" width="29" height="14" rx="2.5" fill="#1e3f6e" stroke="#8a95a5" stroke-width="1"/><text x="1690" y="828" font-size="10" fill="#a9b4c4" text-anchor="middle">D160</text>
<rect x="1462.5" y="890" width="29" height="14" rx="2.5" fill="#1e3f6e" stroke="#8a95a5" stroke-width="1"/><text x="1477" y="901" font-size="10" fill="#a9b4c4" text-anchor="middle">D160</text>
<rect x="1583.5" y="893" width="29" height="14" rx="2.5" fill="#1e3f6e" stroke="#8a95a5" stroke-width="1"/><text x="1598" y="904" font-size="10" fill="#a9b4c4" text-anchor="middle">D170</text>
<rect x="562.5" y="593" width="29" height="14" rx="2.5" fill="#1e3f6e" stroke="#8a95a5" stroke-width="1"/><text x="577" y="604" font-size="10" fill="#a9b4c4" text-anchor="middle">D575</text>
<rect x="1429.0" y="559" width="22" height="14" rx="2.5" fill="#3f5a22" stroke="#8a9a7a" stroke-width="1"/><text x="1440" y="570" font-size="10" fill="#b0bca0" text-anchor="middle">E80</text>
<rect x="1726.0" y="448" width="22" height="14" rx="2.5" fill="#3f5a22" stroke="#8a9a7a" stroke-width="1"/><text x="1737" y="459" font-size="10" fill="#b0bca0" text-anchor="middle">E80</text>
<path d="M238 229 L250 229 L254 236 L250 243 L238 243Z" fill="#8a5a1c" stroke="#7a6a4a"/><text x="242" y="240" font-size="9" fill="#2a2418">-1</text>
<path d="M1351 509 L1355 502 L1371 502 L1375 509 L1371 516 L1355 516Z" fill="#8a5a1c" stroke="#7a6a4a"/><text x="1363" y="513" font-size="10" fill="#2a2418" text-anchor="middle">O-7</text>
<path d="M571 370 L575 363 L591 363 L595 370 L591 377 L575 377Z" fill="#8a5a1c" stroke="#7a6a4a"/><text x="583" y="374" font-size="10" fill="#2a2418" text-anchor="middle">O-7</text>
<text x="662" y="161" font-size="12.2" fill="#1c2024" stroke="#737b74" stroke-width="2.4" paint-order="stroke" stroke-linejoin="round">Ahmetli</text>
<text x="708" y="159" font-size="12.2" fill="#1c2024" stroke="#737b74" stroke-width="2.4" paint-order="stroke" stroke-linejoin="round">Çayırbaşı</text>
<text x="759" y="167" font-size="12.2" fill="#1c2024" stroke="#737b74" stroke-width="2.4" paint-order="stroke" stroke-linejoin="round">Akçakese</text>
<text x="850" y="171" font-size="12.2" fill="#1c2024" stroke="#737b74" stroke-width="2.4" paint-order="stroke" stroke-linejoin="round">Ağva Merkez</text>
<text x="918" y="190" font-size="12.2" fill="#1c2024" stroke="#737b74" stroke-width="2.4" paint-order="stroke" stroke-linejoin="round">Pınarlı</text>
<text x="970" y="182" font-size="12.2" fill="#1c2024" stroke="#737b74" stroke-width="2.4" paint-order="stroke" stroke-linejoin="round">Bağırganlı</text>
<text x="869" y="200" font-size="12.2" fill="#1c2024" stroke="#737b74" stroke-width="2.4" paint-order="stroke" stroke-linejoin="round">Göçe</text>
<text x="957" y="226" font-size="12.2" fill="#1c2024" stroke="#737b74" stroke-width="2.4" paint-order="stroke" stroke-linejoin="round">Beylerbeyi</text>
<text x="805" y="260" font-size="12.2" fill="#1c2024" stroke="#737b74" stroke-width="2.4" paint-order="stroke" stroke-linejoin="round">Hacıllı</text>
<text x="763" y="286" font-size="12.2" fill="#1c2024" stroke="#737b74" stroke-width="2.4" paint-order="stroke" stroke-linejoin="round">Tepemanayır</text>
<text x="1080" y="237" font-size="12.2" fill="#1c2024" stroke="#737b74" stroke-width="2.4" paint-order="stroke" stroke-linejoin="round">Kandıra</text>
<text x="1195" y="165" font-size="12.2" fill="#1c2024" stroke="#737b74" stroke-width="2.4" paint-order="stroke" stroke-linejoin="round">Karaağaç</text>
<text x="1227" y="193" font-size="12.2" fill="#1c2024" stroke="#737b74" stroke-width="2.4" paint-order="stroke" stroke-linejoin="round">Birlik</text>
<text x="1189" y="272" font-size="12.2" fill="#1c2024" stroke="#737b74" stroke-width="2.4" paint-order="stroke" stroke-linejoin="round">Kaynarca</text>
<text x="1277" y="210" font-size="12.2" fill="#1c2024" stroke="#737b74" stroke-width="2.4" paint-order="stroke" stroke-linejoin="round">Büyükyanık</text>
<text x="1452" y="192" font-size="12.2" fill="#1c2024" stroke="#737b74" stroke-width="2.4" paint-order="stroke" stroke-linejoin="round">Yeni</text>
<text x="1475" y="212" font-size="12.2" fill="#1c2024" stroke="#737b74" stroke-width="2.4" paint-order="stroke" stroke-linejoin="round">Karasu</text>
<text x="1590" y="251" font-size="12.2" fill="#1c2024" stroke="#737b74" stroke-width="2.4" paint-order="stroke" stroke-linejoin="round">Kocaali</text>
<text x="1660" y="241" font-size="12.2" fill="#1c2024" stroke="#737b74" stroke-width="2.4" paint-order="stroke" stroke-linejoin="round">Caferiye</text>
<text x="1360" y="287" font-size="12.2" fill="#1c2024" stroke="#737b74" stroke-width="2.4" paint-order="stroke" stroke-linejoin="round">Gölkent</text>
<text x="1393" y="316" font-size="12.2" fill="#1c2024" stroke="#737b74" stroke-width="2.4" paint-order="stroke" stroke-linejoin="round">Limandere</text>
<text x="1361" y="332" font-size="12.2" fill="#1c2024" stroke="#737b74" stroke-width="2.4" paint-order="stroke" stroke-linejoin="round">Sinanoğlu</text>
<text x="1572" y="294" font-size="12.2" fill="#1c2024" stroke="#737b74" stroke-width="2.4" paint-order="stroke" stroke-linejoin="round">Kirazlı</text>
<text x="1632" y="288" font-size="12.2" fill="#1c2024" stroke="#737b74" stroke-width="2.4" paint-order="stroke" stroke-linejoin="round">Gümüşoluk</text>
<text x="1506" y="322" font-size="12.2" fill="#1c2024" stroke="#737b74" stroke-width="2.4" paint-order="stroke" stroke-linejoin="round">Kurudere</text>
<text x="1329" y="363" font-size="12.2" fill="#1c2024" stroke="#737b74" stroke-width="2.4" paint-order="stroke" stroke-linejoin="round">Ferizli</text>
<text x="1313" y="398" font-size="12.2" fill="#1c2024" stroke="#737b74" stroke-width="2.4" paint-order="stroke" stroke-linejoin="round">Söğütlü</text>
<text x="1735" y="407" font-size="12.2" fill="#1c2024" stroke="#737b74" stroke-width="2.4" paint-order="stroke" stroke-linejoin="round">Çilimli</text>
<text x="1657" y="427" font-size="12.2" fill="#1c2024" stroke="#737b74" stroke-width="2.4" paint-order="stroke" stroke-linejoin="round">Cumayeri</text>
<text x="1772" y="442" font-size="12.2" fill="#1c2024" stroke="#737b74" stroke-width="2.4" paint-order="stroke" stroke-linejoin="round">Taşköprü</text>
<text x="1645" y="453" font-size="12.2" fill="#1c2024" stroke="#737b74" stroke-width="2.4" paint-order="stroke" stroke-linejoin="round">Gümüşova</text>
<text x="1430" y="464" font-size="12.2" fill="#1c2024" stroke="#737b74" stroke-width="2.4" paint-order="stroke" stroke-linejoin="round">Sivritepe</text>
<text x="1511" y="502" font-size="12.2" fill="#1c2024" stroke="#737b74" stroke-width="2.4" paint-order="stroke" stroke-linejoin="round">Hendek</text>
<text x="1596" y="500" font-size="12.2" fill="#1c2024" stroke="#737b74" stroke-width="2.4" paint-order="stroke" stroke-linejoin="round">Yeşilyayla</text>
<text x="1694" y="521" font-size="12.2" fill="#1c2024" stroke="#737b74" stroke-width="2.4" paint-order="stroke" stroke-linejoin="round">Gölyaka</text>
<text x="1768" y="533" font-size="12.2" fill="#1c2024" stroke="#737b74" stroke-width="2.4" paint-order="stroke" stroke-linejoin="round">Aydınpınar</text>
<text x="1310" y="563" font-size="12.2" fill="#1c2024" stroke="#737b74" stroke-width="2.4" paint-order="stroke" stroke-linejoin="round">kirpaşa</text>
<text x="1363" y="588" font-size="12.2" fill="#1c2024" stroke="#737b74" stroke-width="2.4" paint-order="stroke" stroke-linejoin="round">Bedilkazancı</text>
<text x="1476" y="602" font-size="12.2" fill="#1c2024" stroke="#737b74" stroke-width="2.4" paint-order="stroke" stroke-linejoin="round">Altındere</text>
<text x="1624" y="594" font-size="12.2" fill="#1c2024" stroke="#737b74" stroke-width="2.4" paint-order="stroke" stroke-linejoin="round">Dikmen</text>
<text x="1310" y="607" font-size="12.2" fill="#1c2024" stroke="#737b74" stroke-width="2.4" paint-order="stroke" stroke-linejoin="round">arreşitbey</text>
<text x="1427" y="609" font-size="12.2" fill="#1c2024" stroke="#737b74" stroke-width="2.4" paint-order="stroke" stroke-linejoin="round">Akyazı</text>
<text x="1423" y="634" font-size="12.2" fill="#1c2024" stroke="#737b74" stroke-width="2.4" paint-order="stroke" stroke-linejoin="round">Alaağaç</text>
<text x="1352" y="648" font-size="12.2" fill="#1c2024" stroke="#737b74" stroke-width="2.4" paint-order="stroke" stroke-linejoin="round">Karapürçek</text>
<text x="1436" y="662" font-size="12.2" fill="#1c2024" stroke="#737b74" stroke-width="2.4" paint-order="stroke" stroke-linejoin="round">Kuzuluk</text>
<text x="1708" y="714" font-size="12.2" fill="#1c2024" stroke="#737b74" stroke-width="2.4" paint-order="stroke" stroke-linejoin="round">Taşkesti</text>
<text x="1730" y="777" font-size="12.2" fill="#1c2024" stroke="#737b74" stroke-width="2.4" paint-order="stroke" stroke-linejoin="round">Çavuşdere</text>
<text x="1721" y="828" font-size="12.2" fill="#1c2024" stroke="#737b74" stroke-width="2.4" paint-order="stroke" stroke-linejoin="round">Gökören</text>
<text x="1705" y="867" font-size="12.2" fill="#1c2024" stroke="#737b74" stroke-width="2.4" paint-order="stroke" stroke-linejoin="round">Çatacık</text>
<text x="1542" y="878" font-size="12.2" fill="#1c2024" stroke="#737b74" stroke-width="2.4" paint-order="stroke" stroke-linejoin="round">Göynük</text>
<text x="1522" y="903" font-size="12.2" fill="#1c2024" stroke="#737b74" stroke-width="2.4" paint-order="stroke" stroke-linejoin="round">Kumcuk</text>
<text x="1211" y="644" font-size="12.2" fill="#1c2024" stroke="#737b74" stroke-width="2.4" paint-order="stroke" stroke-linejoin="round">Karaçam</text>
<text x="1176" y="746" font-size="12.2" fill="#1c2024" stroke="#737b74" stroke-width="2.4" paint-order="stroke" stroke-linejoin="round">Alifuatpaşa</text>
<text x="1129" y="766" font-size="12.2" fill="#1c2024" stroke="#737b74" stroke-width="2.4" paint-order="stroke" stroke-linejoin="round">Gökgöz</text>
<text x="1085" y="780" font-size="12.2" fill="#1c2024" stroke="#737b74" stroke-width="2.4" paint-order="stroke" stroke-linejoin="round">Pamukova</text>
<text x="1185" y="777" font-size="12.2" fill="#1c2024" stroke="#737b74" stroke-width="2.4" paint-order="stroke" stroke-linejoin="round">Geyve</text>
<text x="1148" y="858" font-size="12.2" fill="#1c2024" stroke="#737b74" stroke-width="2.4" paint-order="stroke" stroke-linejoin="round">Akdoğan</text>
<text x="1330" y="884" font-size="12.2" fill="#1c2024" stroke="#737b74" stroke-width="2.4" paint-order="stroke" stroke-linejoin="round">Taraklı</text>
<text x="882" y="636" font-size="12.2" fill="#1c2024" stroke="#737b74" stroke-width="2.4" paint-order="stroke" stroke-linejoin="round">Ferhadiye</text>
<text x="788" y="759" font-size="12.2" fill="#1c2024" stroke="#737b74" stroke-width="2.4" paint-order="stroke" stroke-linejoin="round">Tacir</text>
<text x="773" y="799" font-size="12.2" fill="#1c2024" stroke="#737b74" stroke-width="2.4" paint-order="stroke" stroke-linejoin="round">Elbeyli</text>
<text x="644" y="803" font-size="12.2" fill="#1c2024" stroke="#737b74" stroke-width="2.4" paint-order="stroke" stroke-linejoin="round">Boyalıca</text>
<text x="724" y="815" font-size="12.2" fill="#1c2024" stroke="#737b74" stroke-width="2.4" paint-order="stroke" stroke-linejoin="round">Çakırca</text>
<text x="773" y="853" font-size="12.2" fill="#1c2024" stroke="#737b74" stroke-width="2.4" paint-order="stroke" stroke-linejoin="round">İznik</text>
<text x="781" y="877" font-size="12.2" fill="#1c2024" stroke="#737b74" stroke-width="2.4" paint-order="stroke" stroke-linejoin="round">Çamdibi</text>
<text x="633" y="902" font-size="12.2" fill="#1c2024" stroke="#737b74" stroke-width="2.4" paint-order="stroke" stroke-linejoin="round">Müşküle</text>
<text x="975" y="922" font-size="12.2" fill="#1c2024" stroke="#737b74" stroke-width="2.4" paint-order="stroke" stroke-linejoin="round">Osmaneli</text>
<text x="561" y="428" font-size="12.2" fill="#1c2024" stroke="#737b74" stroke-width="2.4" paint-order="stroke" stroke-linejoin="round">Balçık</text>
<text x="569" y="473" font-size="12.2" fill="#1c2024" stroke="#737b74" stroke-width="2.4" paint-order="stroke" stroke-linejoin="round">Kirazpınar</text>
<text x="1801" y="220" font-size="12.2" fill="#1c2024" stroke="#737b74" stroke-width="2.4" paint-order="stroke" stroke-linejoin="round">ako</text>
<text x="1800" y="387" font-size="12.2" fill="#1c2024" stroke="#737b74" stroke-width="2.4" paint-order="stroke" stroke-linejoin="round">Kor</text>
<text x="1813" y="359" font-size="12.2" fill="#1c2024" stroke="#737b74" stroke-width="2.4" paint-order="stroke" stroke-linejoin="round">B</text>
<text x="1807" y="710" font-size="12.2" fill="#1c2024" stroke="#737b74" stroke-width="2.4" paint-order="stroke" stroke-linejoin="round">Gö</text>
<text x="240" y="669" font-size="12.2" fill="#1c2024" stroke="#737b74" stroke-width="2.4" paint-order="stroke" stroke-linejoin="round">öy</text>
<text x="557" y="495" font-size="14" font-weight="bold" fill="#1c2024" stroke="#737b74" stroke-width="2.4" paint-order="stroke">Gebze</text>
<text x="246" y="298" font-size="15" font-weight="bold" fill="#1c2024" text-anchor="middle">n</text>
<text x="617" y="834" font-size="13" font-style="italic" fill="#11525c" transform="rotate(14 617 834)">İznik Gölü</text>
<text x="251" y="912" font-size="18" fill="#8a8b8a" stroke="#262726" stroke-width="2.6" paint-order="stroke" stroke-linejoin="round" textLength="55">Google</text>
<rect x="1466" y="905" width="354" height="15" fill="#687068"/>
<g font-size="9.8" fill="#17191b"><text x="1471" y="916">Keyboard shortcuts</text><text x="1570" y="916">Map data ©2026 Google</text><text x="1691" y="916">Terms</text><text x="1731" y="916">Report a map error</text></g><g fill="#5f6763"><rect x="1563" y="906" width="1" height="13"/><rect x="1684" y="906" width="1" height="13"/><rect x="1724" y="906" width="1" height="13"/></g>
<circle cx="1790" cy="875.5" r="20" fill="#6a706d"/>
<path d="M1786 870 L1790 865.5 L1794 870 M1784 871.5 L1779.5 875.5 L1784 879.5 M1796 871.5 L1800.5 875.5 L1796 879.5 M1786 881 L1790 885.5 L1794 881" stroke="#2a2c2e" stroke-width="2.2" fill="none"/>
</svg>
</div>

<!-- HEADER -->
<div id="hdr" class="abs">
  <div class="abs sx" style="left:16px;top:14.5px;font-size:24px;font-weight:bold;color:#0a636e;transform:scaleX(.9)">Map</div>
</div>
<div id="strip" class="abs"></div>
<div id="fbox" class="abs"></div>
<div class="chip" style="left:615px;width:95px;background:#095d68"><svg width="20" height="16" viewBox="0 0 20 16"><path d="M2 8.5 L7 13.5 L18 2.5" stroke="#8e8c8a" stroke-width="2.4" fill="none"/></svg><span>Clients</span></div>
<div class="chip" style="left:718px;width:99px;background:#3a1052"><svg width="20" height="16" viewBox="0 0 20 16"><path d="M2 8.5 L7 13.5 L18 2.5" stroke="#8e8c8a" stroke-width="2.4" fill="none"/></svg><span>Visitors</span></div>
<div class="chip" style="left:849px;width:98px;background:#0c2c58"><svg width="20" height="16" viewBox="0 0 20 16"><path d="M2 8.5 L7 13.5 L18 2.5" stroke="#8e8c8a" stroke-width="2.4" fill="none"/></svg><span>Current</span></div>
<div class="chip" style="left:955px;width:83px;background:#16421a"><svg width="20" height="16" viewBox="0 0 20 16"><path d="M2 8.5 L7 13.5 L18 2.5" stroke="#8e8c8a" stroke-width="2.4" fill="none"/></svg><span>High</span></div>
<div class="chip" style="left:1046px;width:102px;background:#7a4f14"><svg width="20" height="16" viewBox="0 0 20 16"><path d="M2 8.5 L7 13.5 L18 2.5" stroke="#8e8c8a" stroke-width="2.4" fill="none"/></svg><span>Medium</span></div>
<div class="chip" style="left:1155px;width:81px;background:#5b1416"><svg width="20" height="16" viewBox="0 0 20 16"><path d="M2 8.5 L7 13.5 L18 2.5" stroke="#8e8c8a" stroke-width="2.4" fill="none"/></svg><span>Low</span></div>
<div class="chip" style="left:1244px;width:82px;background:#0a4448"><svg width="20" height="16" viewBox="0 0 20 16"><path d="M2 8.5 L7 13.5 L18 2.5" stroke="#8e8c8a" stroke-width="2.4" fill="none"/></svg><span>New</span></div>
<div class="abs" style="left:832px;top:72px;width:1px;height:24px;background:#1f222a"></div>
<div class="abs" style="left:1342px;top:72px;width:1px;height:24px;background:#1f222a"></div>
<div class="abs" style="left:1358px;top:69px;width:87px;height:30px;border-radius:15px;border:1px solid #2a2d35;background:#090b11"></div><div class="abs sx" style="left:1371px;top:76px;color:#999a9b;font-size:12px;font-weight:bold;white-space:nowrap;transform:scaleX(.9)">Online Only</div>
<div id="legend" class="abs"></div>
<div class="lg" style="left:687px"><i style="background:#0e3c76"></i>Current Client</div>
<div class="lg" style="left:790px"><i style="background:#19481d"></i>High Potential</div>
<div class="lg" style="left:896px"><i style="background:#89591a"></i>Medium Potential</div>
<div class="lg" style="left:1020px"><i style="background:#6b1719"></i>Low Potential</div>
<div class="lg" style="left:1123px"><i style="background:#0a4a50"></i>New Client</div>
<div class="lg" style="left:1220px"><i style="background:#3b1054"></i>Visitor Online</div>
<div class="lg" style="left:1322px"><i style="background:#39393a"></i>Visitor Offline</div>

<!-- LEFT SIDEBAR -->
<div id="lsb" class="abs">
  <!-- logo -->
  <div class="abs" style="left:17px;top:18px;width:46px;height:46px;border-radius:8px;background:#7b7b7b;box-shadow:0 1px 2px rgba(0,0,0,.4)">
    <svg width="46" height="46" viewBox="0 0 46 46" style="position:absolute;left:0;top:0">
      <defs><filter id="lsh" x="-50%" y="-50%" width="200%" height="200%"><feGaussianBlur stdDeviation="2.2"/></filter></defs>
      <g fill="none" stroke="#3a3a3a" stroke-width="3.5" stroke-linecap="round" stroke-linejoin="round" filter="url(#lsh)" opacity="0.8" transform="translate(1,3)">
        <path d="M10.5 14.5 L16.5 11 L22 13.5 L22.5 19.5 M16.5 23 L20 20.5 L25 21 L28 24.5 L33 20.5 L32.7 12.5 M16.5 23 L16.5 29.5 L23 33.5 L23 30.5"/>
      </g>
      <g fill="none" stroke="#1d2029" stroke-width="3.1" stroke-linecap="round" stroke-linejoin="round">
        <path d="M10.5 14.5 L16.5 11 L22 13.5 L22.5 19.5 M16.5 23 L20 20.5 L25 21 L28 24.5 L33 20.5 L32.7 12.5 M16.5 23 L16.5 29.5 L23 33.5 L23 30.5"/>
      </g>
    </svg>
  </div>
  <div class="abs sx" style="left:76px;top:33px;font-size:16px;font-weight:bold;color:#a9a9aa;transform:scaleX(.89)">TrinityTech</div>
  <div class="div" style="left:0;top:77px;width:240px;background:#1b1f26"></div>
  <div class="abs" style="left:16px;top:94px;width:40px;height:40px;border-radius:20px;background:#04565f;color:#040606;font-size:15px;line-height:41px;text-align:center">K</div>
  <div class="abs sx" style="left:68px;top:97px;font-size:14px;font-weight:bold;color:#a3a3a4;transform:scaleX(.955);white-space:nowrap">k.imani@trinitytech.dev</div>
  <div class="abs" style="left:68px;top:117px;font-size:11.3px;color:#6b6c6f;white-space:nowrap">Company Admin</div>
  <div class="div" style="left:0;top:150px;width:240px;background:#0b2a32"></div>

  <!-- Dashboard -->
  <svg class="abs" style="left:27.3px;top:161.3px" width="21.3" height="21.3" viewBox="0 0 24 24"><path fill="#5a5e66" d="M3 13h8V3H3v10zm0 8h8v-6H3v6zm10 0h8V11h-8v10zm0-18v6h8V3h-8z"/></svg>
  <div class="ltxt" style="left:60px;top:163px">Dashboard</div>
  <!-- Warehouses -->
  <svg class="abs" style="left:26.9px;top:208.4px" width="21.4" height="21.4" viewBox="0 0 24 24"><path fill="#5a5e66" d="M22 21V7L12 3 2 7v14h5v-9h10v9h5zm-11-2H9v2h2v-2zm2-3h-2v2h2v-2zm2 3h-2v2h2v-2z"/></svg>
  <div class="ltxt" style="left:60px;top:211px">Warehouses</div>
  <svg class="abs" style="left:196px;top:216px" width="12" height="8" viewBox="0 0 12 8"><path d="M1 1.5 L6 6.5 L11 1.5" stroke="#6b6e74" stroke-width="1.6" fill="none"/></svg>

  <div class="div" style="left:16px;top:252px;width:208px"></div>
  <!-- Sales header -->
  <svg class="abs" style="left:27.3px;top:274.8px" width="21.3" height="21.3" viewBox="0 0 24 24"><path fill="#5a5e66" d="M19.5 3.5L18 2l-1.5 1.5L15 2l-1.5 1.5L12 2l-1.5 1.5L9 2 7.5 3.5 6 2v14H3v3c0 1.66 1.34 3 3 3h12c1.66 0 3-1.34 3-3V2l-1.5 1.5zM19 19c0 .55-.45 1-1 1s-1-.45-1-1v-3H8V5h11v14zM9 7h6v2H9zm7 0h2v2h-2zm-7 3h6v2H9zm7 0h2v2h-2z"/></svg>
  <div class="ltxt" style="left:60px;top:276px">Sales</div>
  <svg class="abs" style="left:196px;top:280px" width="12" height="8" viewBox="0 0 12 8"><path d="M1 6.5 L6 1.5 L11 6.5" stroke="#6b6e74" stroke-width="1.6" fill="none"/></svg>

  <svg class="abs" style="left:39.4px;top:322.4px" width="19.2" height="19.2" viewBox="0 0 24 24"><path fill="#5a5e66" d="M17 2H7c-1.1 0-2 .9-2 2v2c0 1.1.9 2 2 2h10c1.1 0 2-.9 2-2V4c0-1.1-.9-2-2-2zm0 4H7V4h10v2zm3 16H4c-1.1 0-2-.9-2-2v-1h20v1c0 1.1-.9 2-2 2zm-1.47-11.81C18.21 9.47 17.49 9 16.7 9H7.3c-.79 0-1.51.47-1.83 1.19L2 18h20l-3.47-7.81zM9.5 16h-1c-.28 0-.5-.22-.5-.5s.22-.5.5-.5h1c.28 0 .5.22.5.5s-.22.5-.5.5zm0-2h-1c-.28 0-.5-.22-.5-.5s.22-.5.5-.5h1c.28 0 .5.22.5.5s-.22.5-.5.5zm0-2h-1c-.28 0-.5-.22-.5-.5s.22-.5.5-.5h1c.28 0 .5.22.5.5s-.22.5-.5.5zm3 4h-1c-.28 0-.5-.22-.5-.5s.22-.5.5-.5h1c.28 0 .5.22.5.5s-.22.5-.5.5zm0-2h-1c-.28 0-.5-.22-.5-.5s.22-.5.5-.5h1c.28 0 .5.22.5.5s-.22.5-.5.5zm0-2h-1c-.28 0-.5-.22-.5-.5s.22-.5.5-.5h1c.28 0 .5.22.5.5s-.22.5-.5.5zm3 4h-1c-.28 0-.5-.22-.5-.5s.22-.5.5-.5h1c.28 0 .5.22.5.5s-.22.5-.5.5zm0-2h-1c-.28 0-.5-.22-.5-.5s.22-.5.5-.5h1c.28 0 .5.22.5.5s-.22.5-.5.5zm0-2h-1c-.28 0-.5-.22-.5-.5s.22-.5.5-.5h1c.28 0 .5.22.5.5s-.22.5-.5.5z"/></svg>
  <div class="subtxt" style="left:70px;top:323px">Sales</div>
  <svg class="abs" style="left:39.5px;top:363.8px" width="19" height="19" viewBox="0 0 24 24"><path fill="#5a5e66" d="M20 8h-3V4H3c-1.1 0-2 .9-2 2v11h2c0 1.66 1.34 3 3 3s3-1.34 3-3h6c0 1.66 1.34 3 3 3s3-1.34 3-3h2v-5l-3-4zM6 18.5c-.83 0-1.5-.67-1.5-1.5s.67-1.5 1.5-1.5 1.5.67 1.5 1.5-.67 1.5-1.5 1.5zm13.5-9l1.96 2.5H17V9.5h2.5zm-1.5 9c-.83 0-1.5-.67-1.5-1.5s.67-1.5 1.5-1.5 1.5.67 1.5 1.5-.67 1.5-1.5 1.5z"/></svg>
  <div class="subtxt" style="left:70px;top:366px">Deliveries</div>
  <svg class="abs" style="left:39.7px;top:408.1px" width="18.7" height="18.7" viewBox="0 0 24 24"><path fill="#5a5e66" d="M19 3h-4.18C14.4 1.84 13.3 1 12 1c-1.3 0-2.4.84-2.82 2H5c-1.1 0-2 .9-2 2v14c0 1.1.9 2 2 2h14c1.1 0 2-.9 2-2V5c0-1.1-.9-2-2-2zm-7 0c.55 0 1 .45 1 1s-.45 1-1 1-1-.45-1-1 .45-1 1-1zm4 12h-4v3l-5-5 5-5v3h4v4z"/></svg>
  <div class="subtxt" style="left:70px;top:409px">Returns</div>
  <svg class="abs" style="left:42px;top:451px" width="14" height="16" viewBox="0 0 14 16"><circle cx="7" cy="7" r="7" fill="#5a5e66"/><circle cx="7" cy="5" r="2.3" fill="#0b0e16"/><path d="M2.8 11 a5 3 0 0 1 8.4 0" fill="#0b0e16"/><path d="M5 13.5L7 16L9 13.5z" fill="#5a5e66"/></svg>
  <div class="subtxt" style="left:70px;top:452px">Clients</div>
  <svg class="abs" style="left:39.2px;top:492.3px" width="19" height="19" viewBox="0 0 24 24"><path fill="#5a5e66" d="M20 7h-5V4c0-1.1-.9-2-2-2h-2c-1.1 0-2 .9-2 2v3H4c-1.1 0-2 .9-2 2v11c0 1.1.9 2 2 2h16c1.1 0 2-.9 2-2V9c0-1.1-.9-2-2-2zM9 12c.83 0 1.5.67 1.5 1.5S9.83 15 9 15s-1.5-.67-1.5-1.5S8.17 12 9 12zm3 6H6v-.43c0-.6.36-1.15.92-1.39.64-.28 1.34-.43 2.08-.43s1.44.15 2.08.43c.55.24.92.78.92 1.39V18zm1-9h-2V4h2v5zm4.5 7.5h-3V15h3v1.5zm0-3h-3V12h3v1.5z"/></svg>
  <div class="subtxt" style="left:70px;top:495px">Visitors</div>

  <div class="div" style="left:16px;top:532px;width:208px"></div>
  <!-- Reports -->
  <svg class="abs" style="left:27.1px;top:554.7px" width="21.7" height="21.7" viewBox="0 0 24 24"><path fill="#5a5e66" fill-rule="evenodd" d="M4 9h4v11H4zm12 4h4v7h-4zm-6-9h4v16h-4z"/></svg>
  <div class="ltxt" style="left:60px;top:556px">Reports</div>
  <svg class="abs" style="left:196px;top:560px" width="12" height="8" viewBox="0 0 12 8"><path d="M1 6.5 L6 1.5 L11 6.5" stroke="#6b6e74" stroke-width="1.6" fill="none"/></svg>
  <svg class="abs" style="left:39.5px;top:601.5px" width="19" height="19" viewBox="0 0 24 24"><path fill="#5a5e66" fill-rule="evenodd" d="M9.12 5c-1.1 0-2-.9-2-2s.9-2 2-2 2 .9 2 2-.9 2-2 2zM5.62 8.9L3 23h2.1l1.75-8L9 17v6h2v-7.55L8.94 13.4l.6-3C10.84 12 12.8 13 15 13v-2c-1.86 0-3.45-1-4.27-2.43l-.96-1.6C9.43 6.39 8.8 6 8.12 6c-.26 0-.5.05-.75.15L2 8.3V13h2V9.65l1.62-.75zM13 1v7h3.75v15h1.5V8H22V1h-9zm7.5 5.5h-6v-4h6z"/></svg>
  <div class="subtxt" style="left:70px;top:603px">Follow Ups</div>
  <svg class="abs" style="left:38.8px;top:644.3px" width="20" height="20" viewBox="0 0 24 24"><path fill="#5a5e66" d="M19.5 3.5L18 2l-1.5 1.5L15 2l-1.5 1.5L12 2l-1.5 1.5L9 2 7.5 3.5 6 2v14H3v3c0 1.66 1.34 3 3 3h12c1.66 0 3-1.34 3-3V2l-1.5 1.5zM19 19c0 .55-.45 1-1 1s-1-.45-1-1v-3H8V5h11v14zM9 7h6v2H9zm7 0h2v2h-2zm-7 3h6v2H9zm7 0h2v2h-2z"/></svg>
  <div class="subtxt" style="left:70px;top:646px">Sales</div>

  <!-- Map active -->
  <div class="abs" style="left:12px;top:677px;width:216px;height:43px;border-radius:10px;background:#0a1920"></div>
  <svg class="abs" style="left:27.5px;top:689.2px" width="20.9" height="20.9" viewBox="0 0 24 24"><path fill="#0d6673" fill-rule="evenodd" d="M20.5 3l-.16.03L15 5.1 9 3 3.36 4.9c-.21.07-.36.25-.36.48V20.5c0 .28.22.5.5.5l.16-.03L9 18.9l6 2.1 5.64-1.9c.21-.07.36-.25.36-.48V3.5c0-.28-.22-.5-.5-.5zM15 19l-6-2.11V5l6 2.11V19z"/></svg>
  <div class="ltxt" style="left:60px;top:690px;color:#0e6a77">Map</div>
  <div class="abs" style="left:208px;top:689px;width:4px;height:20px;border-radius:2px;background:#0e6a77"></div>

  <div class="div" style="left:16px;top:731px;width:208px"></div>
  <!-- Settings -->
  <svg class="abs" style="left:28.5px;top:754.5px" width="19" height="19" viewBox="0 0 24 24"><path fill="#5a5e66" d="M19.14 12.94c.04-.3.06-.61.06-.94 0-.32-.02-.64-.07-.94l2.03-1.58a.49.49 0 0 0 .12-.61l-1.92-3.32a.49.49 0 0 0-.59-.22l-2.39.96c-.5-.38-1.03-.7-1.62-.94l-.36-2.54a.48.48 0 0 0-.48-.41h-3.84c-.24 0-.43.17-.47.41l-.36 2.54c-.59.24-1.13.57-1.62.94l-2.39-.96c-.22-.08-.47 0-.59.22L2.74 8.87c-.12.21-.08.47.12.61l2.03 1.58c-.05.3-.09.63-.09.94s.02.64.07.94l-2.03 1.58a.49.49 0 0 0-.12.61l1.92 3.32c.12.22.37.29.59.22l2.39-.96c.5.38 1.03.7 1.62.94l.36 2.54c.05.24.24.41.48.41h3.84c.24 0 .44-.17.47-.41l.36-2.54c.59-.24 1.13-.56 1.62-.94l2.39.96c.22.08.47 0 .59-.22l1.92-3.32c.12-.22.07-.47-.12-.61l-2.01-1.58zM12 15.6c-1.98 0-3.6-1.62-3.6-3.6s1.62-3.6 3.6-3.6 3.6 1.62 3.6 3.6-1.62 3.6-3.6 3.6z"/></svg>
  <div class="ltxt" style="left:60px;top:755px">Settings</div>
  <svg class="abs" style="left:196px;top:760px" width="12" height="8" viewBox="0 0 12 8"><path d="M1 1.5 L6 6.5 L11 1.5" stroke="#6b6e74" stroke-width="1.6" fill="none"/></svg>

  <!-- Light mode -->
  <div class="abs" style="left:16px;top:812px;width:208px;height:46px;border-radius:10px;background:#08151b;border:1px solid #0b3840"></div>
  <svg class="abs" style="left:73px;top:826px" width="19" height="19" viewBox="0 0 24 24"><circle cx="12" cy="12" r="5" fill="#0d6774"/><g stroke="#0d6774" stroke-width="2.2" stroke-linecap="round"><path d="M12 1.5v2.5M12 20v2.5M1.5 12h2.5M20 12h2.5M4.6 4.6l1.8 1.8M17.6 17.6l1.8 1.8M4.6 19.4l1.8-1.8M17.6 6.4l1.8-1.8"/></g></svg>
  <div class="abs sx" style="left:100px;top:827px;font-size:13px;font-weight:bold;color:#0d6774;white-space:nowrap;transform:scaleX(.96)">Light Mode</div>
  <!-- Sign out -->
  <div class="abs" style="left:16px;top:870px;width:208px;height:34px;border-radius:17px;border:1px solid #4f1d20"></div>
  <svg class="abs" style="left:76px;top:878px" width="17" height="17" viewBox="0 0 24 24"><path d="M10 4H5a1 1 0 0 0-1 1v14a1 1 0 0 0 1 1h5M14 7l5 5-5 5M19 12H9" fill="none" stroke="#8a2a2c" stroke-width="2.2" stroke-linecap="round" stroke-linejoin="round"/></svg>
  <div class="abs" style="left:101px;top:878px;font-size:15px;font-weight:bold;color:#8a2a2c;white-space:nowrap">Sign Out</div>
</div>

<!-- RIGHT SIDEBAR -->
<div id="rsb" class="abs">
  <svg class="abs" style="left:42px;top:22.6px" width="17" height="17" viewBox="0 0 17 17"><g fill="#5d6067"><rect x="0" y="0" width="4.9" height="4.9"/><rect x="6" y="0" width="4.9" height="4.9"/><rect x="12" y="0" width="4.9" height="4.9"/><rect x="0" y="6" width="4.9" height="4.9"/><rect x="6" y="6" width="4.9" height="4.9"/><rect x="12" y="6" width="4.9" height="4.9"/><rect x="0" y="12" width="4.9" height="4.9"/><rect x="6" y="12" width="4.9" height="4.9"/><rect x="12" y="12" width="4.9" height="4.9"/></g></svg>
  <div class="abs" style="left:0;top:60px;width:100px;height:1px;background:#1c1f26"></div>
  <svg class="abs" style="left:39px;top:92px" width="22" height="22" viewBox="0 0 22 22"><g fill="#5d6067"><rect x="0" y="0" width="9" height="12" rx="1.5"/><rect x="12" y="0" width="10" height="8" rx="1.5"/><rect x="12" y="10" width="10" height="12" rx="1.5"/><rect x="0" y="14" width="9" height="8" rx="1.5"/></g></svg>
  <div class="rlab" style="top:125px">Dashboard</div>
  <svg class="abs" style="left:39px;top:177px" width="22" height="24" viewBox="0 0 22 24"><path fill="#5d6067" d="M1 0h20a1 1 0 0 1 1 1v5H0V1a1 1 0 0 1 1-1zM1 8h20v14a2 2 0 0 1-2 2H3a2 2 0 0 1-2-2z"/><rect x="7" y="11" width="8" height="2" fill="#0a0d15"/></svg>
  <div class="rlab" style="top:211px">Products</div>
  <div class="abs" style="left:1px;top:249px;width:98px;height:74px;border-radius:12px;background:#0a1920"></div>
  <svg class="abs" style="left:35.3px;top:262.3px" width="29.3" height="29.3" viewBox="0 0 24 24"><path fill="#0d6673" fill-rule="evenodd" d="M20.5 3l-.16.03L15 5.1 9 3 3.36 4.9c-.21.07-.36.25-.36.48V20.5c0 .28.22.5.5.5l.16-.03L9 18.9l6 2.1 5.64-1.9c.21-.07.36-.25.36-.48V3.5c0-.28-.22-.5-.5-.5zM15 19l-6-2.11V5l6 2.11V19z"/></svg>
  <div class="rlab" style="top:297px;color:#0e6a77">Map</div>
  <svg class="abs" style="left:36.8px;top:346.5px" width="26.4" height="26.4" viewBox="0 0 24 24"><path fill="#5d6067" fill-rule="evenodd" d="M17 2H7c-1.1 0-2 .9-2 2v2c0 1.1.9 2 2 2h10c1.1 0 2-.9 2-2V4c0-1.1-.9-2-2-2zm0 4H7V4h10v2zm3 16H4c-1.1 0-2-.9-2-2v-1h20v1c0 1.1-.9 2-2 2zm-1.47-11.81C18.21 9.47 17.49 9 16.7 9H7.3c-.79 0-1.51.47-1.83 1.19L2 18h20l-3.47-7.81zM9.5 16h-1c-.28 0-.5-.22-.5-.5s.22-.5.5-.5h1c.28 0 .5.22.5.5s-.22.5-.5.5zm0-2h-1c-.28 0-.5-.22-.5-.5s.22-.5.5-.5h1c.28 0 .5.22.5.5s-.22.5-.5.5zm0-2h-1c-.28 0-.5-.22-.5-.5s.22-.5.5-.5h1c.28 0 .5.22.5.5s-.22.5-.5.5zm3 4h-1c-.28 0-.5-.22-.5-.5s.22-.5.5-.5h1c.28 0 .5.22.5.5s-.22.5-.5.5zm0-2h-1c-.28 0-.5-.22-.5-.5s.22-.5.5-.5h1c.28 0 .5.22.5.5s-.22.5-.5.5zm0-2h-1c-.28 0-.5-.22-.5-.5s.22-.5.5-.5h1c.28 0 .5.22.5.5s-.22.5-.5.5zm3 4h-1c-.28 0-.5-.22-.5-.5s.22-.5.5-.5h1c.28 0 .5.22.5.5s-.22.5-.5.5zm0-2h-1c-.28 0-.5-.22-.5-.5s.22-.5.5-.5h1c.28 0 .5.22.5.5s-.22.5-.5.5zm0-2h-1c-.28 0-.5-.22-.5-.5s.22-.5.5-.5h1c.28 0 .5.22.5.5s-.22.5-.5.5z"/></svg>
  <div class="rlab" style="top:383px">Sales</div>
  <svg class="abs" style="left:36px;top:432.4px" width="28.8" height="28.8" viewBox="0 0 24 24"><path fill="#5d6067" fill-rule="evenodd" d="M22 21V7L12 3 2 7v14h5v-9h10v9h5zm-11-2H9v2h2v-2zm2-3h-2v2h2v-2zm2 3h-2v2h2v-2z"/></svg>
  <div class="rlab" style="top:469px">Warehouse</div>
</div>


<!-- PINS PANEL -->
<div class="abs" style="left:252px;top:156px;width:320px;height:752px;border-radius:12px;background:#0f131c;overflow:hidden">
  <div class="abs" style="left:0;top:52px;width:320px;height:1px;background:#1d222b"></div>
  <svg class="abs" style="left:23px;top:176px;top:20px" width="10" height="13" viewBox="0 0 10 13"><path d="M8 1 L2.5 6.5 L8 12" stroke="#6f7277" stroke-width="1.8" fill="none"/></svg>
  <svg class="abs" style="left:47px;top:18px" width="12" height="16" viewBox="0 0 24 32"><path fill="#0d6a77" d="M12 0C5.4 0 0 5.4 0 12c0 9 12 20 12 20s12-11 12-20C24 5.4 18.6 0 12 0zm0 16.5a4.5 4.5 0 1 1 0-9 4.5 4.5 0 0 1 0 9z"/></svg>
  <div class="abs sx" style="left:67px;top:19px;font-size:14px;font-weight:bold;color:#a6a7a8;white-space:nowrap;transform:scaleX(.915)">Pins (1)</div>
  <div class="abs sx" style="left:272px;top:20px;font-size:12px;font-weight:bold;color:#0d6774;white-space:nowrap;transform:scaleX(.91)">Clear</div>
  <div class="abs" style="left:12px;top:62px;width:296px;height:39px;border-radius:8px;background:#07090e;border:1px solid #222731"></div>
  <svg class="abs" style="left:25px;top:74px" width="14" height="14" viewBox="0 0 14 14"><circle cx="5.5" cy="5.5" r="4.3" stroke="#6a6d72" stroke-width="1.8" fill="none"/><path d="M8.7 8.7 L13 13" stroke="#6a6d72" stroke-width="2" stroke-linecap="round"/></svg>
  <div class="abs" style="left:56px;top:73px;font-size:13.5px;color:#6a6c70;white-space:nowrap">Search clients or visitors...</div>
  <div class="abs" style="left:0;top:109px;width:320px;height:1px;background:#161a22"></div>
  <div class="abs sx" style="left:12px;top:131px;font-size:11px;font-weight:bold;color:#75777a;white-space:nowrap;transform:scaleX(.935)">VISITORS (1)</div>
  <div class="abs" style="left:8px;top:152px;width:304px;height:64px;border-radius:8px;background:#11141c;border:2px solid #35352f"></div>
  <div class="abs" style="left:20px;top:164px;width:8px;height:40px;border-radius:4px;background:#38393a"></div>
  <div class="abs sx" style="left:38px;top:168px;font-size:13px;font-weight:bold;color:#a1a2a3;white-space:nowrap;transform:scaleX(.95)">Reza</div>
  <div class="abs" style="left:38px;top:189px;font-size:11.2px;color:#6f7174;white-space:nowrap">Updated: 17h ago</div>
  <div class="abs" style="left:228px;top:166px;width:40px;height:17px;border-radius:3px;background:#22252c;color:#6b6d70;font-size:10px;line-height:19px;text-align:center;overflow:hidden">Offline</div>
  <svg class="abs" style="left:276px;top:176px" width="16" height="16" viewBox="0 0 16 16"><circle cx="8" cy="8" r="6.8" stroke="#6f7276" stroke-width="1.4" fill="none"/><rect x="7.3" y="7" width="1.5" height="5" fill="#6f7276"/><rect x="7.3" y="4" width="1.5" height="1.6" fill="#6f7276"/></svg>
</div>

<!-- MAP CONTROLS -->
<div class="abs" style="left:1764px;top:160px;width:40px;height:40px;border-radius:8px;background:#0b0e16"></div>
<svg class="abs" style="left:1772px;top:168px" width="24" height="24" viewBox="0 0 24 24"><circle cx="12" cy="12" r="6.5" stroke="#919398" stroke-width="2" fill="none"/><circle cx="12" cy="12" r="3" fill="#919398"/><path d="M12 2v3.5M12 18.5V22M2 12h3.5M18.5 12H22" stroke="#919398" stroke-width="2"/></svg>
<div class="abs" style="left:1764px;top:208px;width:40px;height:40px;border-radius:8px;background:#0b0e16"></div>
<svg class="abs" style="left:1774px;top:218px" width="20" height="20" viewBox="0 0 20 20"><path d="M10 2 L18 7.5 L10 13 L2 7.5Z" fill="#919398"/><path d="M2.5 11 L10 16 L17.5 11" stroke="#919398" stroke-width="2" fill="none"/></svg>
<div class="abs" style="left:1764px;top:256px;width:40px;height:40px;border-radius:8px;background:#0b0e16"></div>
<svg class="abs" style="left:1777px;top:269px" width="14" height="14" viewBox="0 0 14 14"><path d="M7 0.5v13M0.5 7h13" stroke="#909297" stroke-width="1.9"/></svg>
<div class="abs" style="left:1764px;top:304px;width:40px;height:40px;border-radius:8px;background:#0b0e16"></div>
<svg class="abs" style="left:1777px;top:317px" width="14" height="14" viewBox="0 0 14 14"><path d="M0.5 7h13" stroke="#909297" stroke-width="1.9"/></svg>

<!-- MODAL -->
<div class="abs" style="left:610px;top:294px;width:700px;height:333px;border-radius:16px;background:#1b2036">
  <div class="abs" style="left:20px;top:20px;width:60px;height:60px;border-radius:14px;background:#262b3d"></div>
  <svg class="abs" style="left:40px;top:36px" width="19" height="27" viewBox="0 0 19 27"><path fill="#6b6b6c" d="M9.5 0C4.3 0 0 4.2 0 9.4 0 16 9.5 27 9.5 27S19 16 19 9.4C19 4.2 14.7 0 9.5 0z"/><circle cx="9.5" cy="7" r="2.6" fill="#262b3d"/><ellipse cx="9.5" cy="13.2" rx="4.8" ry="2.6" fill="#262b3d"/></svg>
  <div class="abs sx" style="left:96px;top:27.3px;font-size:22px;font-weight:bold;color:#f4f4f6;white-space:nowrap;transform:scaleX(.86)">Reza</div>
  <div class="abs" style="left:96px;top:59px;width:10px;height:10px;border-radius:5px;background:#a2a2a4"></div>
  <div class="abs" style="left:112px;top:57px;font-size:14.5px;color:#b9bdc8;white-space:nowrap">Offline</div>
  <svg class="abs" style="left:653px;top:43px" width="14" height="14" viewBox="0 0 14 14"><path d="M1 1L13 13M13 1L1 13" stroke="#c9ccd4" stroke-width="2"/></svg>
  <div class="abs" style="left:20px;top:100px;width:660px;height:1px;background:#384556"></div>
  <div class="abs sx" style="left:20px;top:118px;font-size:15px;font-weight:bold;color:#f4f4f6;white-space:nowrap;transform:scaleX(.9)">Location Information</div>
  <div class="abs sx" style="left:362px;top:118px;font-size:15px;font-weight:bold;color:#f4f4f6;white-space:nowrap;transform:scaleX(.88)">Today's Activity</div>
  <div class="abs" style="left:20px;top:155px;font-size:14px;color:#c1c5ce;white-space:nowrap;line-height:16px">Last Update</div>
  <div class="abs" style="left:140px;top:155px;font-size:14px;color:#f2f2f4;white-space:nowrap;line-height:16px">Feb 22, 2026 03:20</div>
  <div class="abs" style="left:20px;top:183px;font-size:14px;color:#c1c5ce;white-space:nowrap;line-height:16px">Coordinates</div>
  <div class="abs" style="left:140px;top:183px;font-size:14px;color:#f2f2f4;white-space:nowrap;line-height:16px">40.748147, 30.115205</div>
  <div class="abs" style="left:20px;top:211px;font-size:14px;color:#c1c5ce;white-space:nowrap;line-height:16px">Speed</div>
  <div class="abs" style="left:140px;top:211px;font-size:14px;color:#f2f2f4;white-space:nowrap;line-height:16px">0.0 km/h</div>
  <div class="abs" style="left:20px;top:239px;font-size:14px;color:#c1c5ce;white-space:nowrap;line-height:16px">Accuracy</div>
  <div class="abs" style="left:140px;top:239px;font-size:14px;color:#f2f2f4;white-space:nowrap;line-height:16px">36 m</div>

  <div class="abs" style="left:362px;top:149px;width:153px;height:95px;border-radius:12px;background:#1a2c43"></div>
  <svg class="abs" style="left:431px;top:163px" width="15" height="20" viewBox="0 0 24 32"><path fill="#10b6d2" d="M12 0C5.4 0 0 5.4 0 12c0 9 12 20 12 20s12-11 12-20C24 5.4 18.6 0 12 0zm0 16.5a4.5 4.5 0 1 1 0-9 4.5 4.5 0 0 1 0 9z"/></svg>
  <div class="abs" style="left:362px;top:192px;width:153px;text-align:center;font-size:18px;font-weight:bold;color:#f4f4f6">0</div>
  <div class="abs" style="left:362px;top:217px;width:153px;text-align:center;font-size:12.5px;color:#b2b6be">Visits</div>
  <div class="abs" style="left:527px;top:149px;width:153px;height:95px;border-radius:12px;background:#1a2c43"></div>
  <div class="abs" style="left:527px;top:161px;width:153px;text-align:center;font-size:21px;color:#10b6d2">$</div>
  <div class="abs" style="left:527px;top:192px;width:153px;text-align:center;font-size:18px;font-weight:bold;color:#f4f4f6">$0</div>
  <div class="abs" style="left:527px;top:217px;width:153px;text-align:center;font-size:12.5px;color:#b2b6be">Sales</div>

  <div class="abs" style="left:20px;top:281px;width:660px;height:32px;border-radius:16px;background:#666666"></div>
  <svg class="abs" style="left:242px;top:288px" width="18" height="18" viewBox="0 0 18 18"><circle cx="9" cy="9" r="5.5" stroke="#fff" stroke-width="1.8" fill="none"/><circle cx="9" cy="9" r="2.6" fill="#fff"/><path d="M9 1v3M9 14v3M1 9h3M14 9h3" stroke="#fff" stroke-width="1.8"/></svg>
  <div class="abs" style="left:269px;top:288px;font-size:15.3px;font-weight:bold;color:#ffffff;white-space:nowrap">Request Current Location</div>
</div>

<div id="topline" class="abs"></div>
<!-- scrollbar -->
<div class="abs" style="left:0;top:920px;width:1920px;height:3px;background:#18191b"></div>
<div class="abs" style="left:440px;top:920px;width:50px;height:3px;background:#555"></div>
</body></html>
